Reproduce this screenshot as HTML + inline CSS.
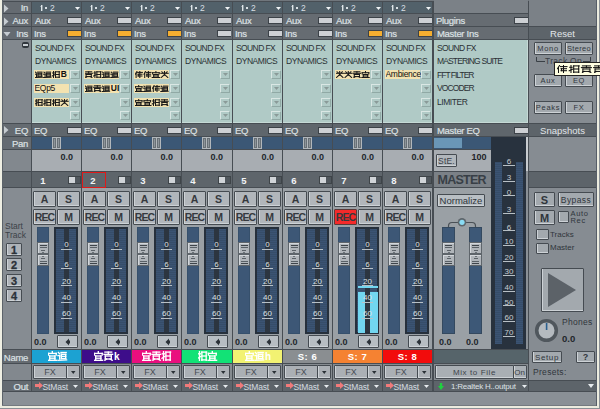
<!DOCTYPE html><html><head><meta charset="utf-8"><style>
html,body{margin:0;padding:0;width:600px;height:409px;overflow:hidden;background:#8a9096}
body{position:relative;font-family:"Liberation Sans",sans-serif}
div,span,svg{position:absolute}
.t{white-space:nowrap}
.btn{box-sizing:border-box;border:1px solid #454b51;box-shadow:inset 1px -1px 0 #cdd2d6;text-align:center;white-space:nowrap;border-radius:1px}
</style></head><body>
<div style="left:0px;top:0px;width:600px;height:409px;background:#8a9096"></div>
<div style="left:3px;top:0px;width:593px;height:1px;background:#70767c"></div>
<div style="left:3px;top:1px;width:429px;height:1px;background:#474d53"></div>
<div style="left:3px;top:2px;width:28px;height:11px;background:#656b71"></div>
<span class="t" style="left:3px;top:2px;width:25px;text-align:right;color:#dde1e4;font-size:9.5px;line-height:12px;letter-spacing:-0.3px;-webkit-text-stroke:0.2px #dde1e4">In</span>
<div style="left:3px;top:14px;width:28px;height:12px;background:#656b71"></div>
<span class="t" style="left:3px;top:15px;width:25px;text-align:right;color:#dde1e4;font-size:9.5px;line-height:12px;letter-spacing:-0.3px;-webkit-text-stroke:0.2px #dde1e4">Aux</span>
<div style="left:3px;top:27px;width:28px;height:12px;background:#656b71"></div>
<span class="t" style="left:3px;top:28px;width:25px;text-align:right;color:#dde1e4;font-size:9.5px;line-height:12px;letter-spacing:-0.3px;-webkit-text-stroke:0.2px #dde1e4">Ins</span>
<svg style="position:absolute;left:3px;top:2px" width="10" height="38" fill="#c6ccd1"><polygon points="1,2.5 5.5,6.5 1,10.5"/><polygon points="1,15.5 5.5,19.5 1,23.5"/><polygon points="0.5,30 7.5,30 4,34.5"/></svg>
<div style="left:3px;top:13px;width:429px;height:1px;background:#474d53"></div>
<div style="left:3px;top:26px;width:429px;height:1px;background:#474d53"></div>
<div style="left:3px;top:39px;width:429px;height:1px;background:#474d53"></div>
<div style="left:3px;top:40px;width:28px;height:83px;background:#82888e"></div>
<div style="left:22px;top:42px;width:7px;height:6px;background:#30363c;border-radius:2px"></div>
<div style="left:23px;top:44px;width:5px;height:1.5px;background:#c8ced3"></div>
<div style="left:3px;top:123px;width:429px;height:1px;background:#474d53"></div>
<div style="left:3px;top:124px;width:28px;height:12px;background:#656b71"></div>
<svg style="position:absolute;left:3px;top:124px" width="10" height="12" fill="#c6ccd1"><polygon points="1,2 5.5,6 1,10"/></svg>
<span class="t" style="left:3px;top:125px;width:25px;text-align:right;color:#dde1e4;font-size:9.5px;line-height:12px;letter-spacing:-0.3px;-webkit-text-stroke:0.2px #dde1e4">EQ</span>
<div style="left:3px;top:136px;width:429px;height:1px;background:#474d53"></div>
<div style="left:3px;top:137px;width:28px;height:12px;background:#656b71"></div>
<span class="t" style="left:3px;top:138px;width:25px;text-align:right;color:#dde1e4;font-size:9.5px;line-height:12px;letter-spacing:-0.3px;-webkit-text-stroke:0.2px #dde1e4">Pan</span>
<div style="left:3px;top:149px;width:429px;height:1px;background:#474d53"></div>
<div style="left:3px;top:150px;width:28px;height:21px;background:#82888e"></div>
<div style="left:3px;top:171px;width:429px;height:1px;background:#474d53"></div>
<div style="left:3px;top:172px;width:28px;height:15px;background:#60676d"></div>
<div style="left:3px;top:187px;width:429px;height:1px;background:#474d53"></div>
<div style="left:3px;top:188px;width:28px;height:161px;background:#868c92"></div>
<span class="t" style="left:5px;top:221px;color:#3c4248;font-size:8.5px;line-height:10px">Start</span>
<span class="t" style="left:5px;top:230px;color:#3c4248;font-size:8.5px;line-height:10px">Track</span>
<div class="btn" style="left:6px;top:243px;width:16px;height:13px;font-size:11px;line-height:12px;font-weight:bold;color:#2c3238;-webkit-text-stroke:0.3px #2c3238;background:#aeb3b8">1</div>
<div class="btn" style="left:6px;top:258px;width:16px;height:13px;font-size:11px;line-height:12px;font-weight:bold;color:#2c3238;-webkit-text-stroke:0.3px #2c3238;background:#aeb3b8">2</div>
<div class="btn" style="left:6px;top:274px;width:16px;height:13px;font-size:11px;line-height:12px;font-weight:bold;color:#2c3238;-webkit-text-stroke:0.3px #2c3238;background:#aeb3b8">3</div>
<div class="btn" style="left:6px;top:289px;width:16px;height:13px;font-size:11px;line-height:12px;font-weight:bold;color:#2c3238;-webkit-text-stroke:0.3px #2c3238;background:#aeb3b8">4</div>
<div style="left:3px;top:349px;width:429px;height:1px;background:#474d53"></div>
<div style="left:3px;top:350px;width:28px;height:13px;background:#656b71"></div>
<span class="t" style="left:3px;top:351px;width:25px;text-align:right;color:#dde1e4;font-size:9.5px;line-height:13px;letter-spacing:-0.3px;-webkit-text-stroke:0.2px #dde1e4">Name</span>
<div style="left:3px;top:363px;width:429px;height:1px;background:#474d53"></div>
<div style="left:3px;top:364px;width:28px;height:16px;background:#82888e"></div>
<div style="left:3px;top:380px;width:429px;height:1px;background:#474d53"></div>
<div style="left:3px;top:381px;width:28px;height:10px;background:#656b71"></div>
<span class="t" style="left:3px;top:381px;width:25px;text-align:right;color:#dde1e4;font-size:9.5px;line-height:11px;letter-spacing:-0.3px;-webkit-text-stroke:0.2px #dde1e4">Out</span>
<div style="left:3px;top:391px;width:593px;height:1px;background:#474d53"></div>
<div style="left:31px;top:1px;width:1px;height:390px;background:#474d53"></div>
<div style="left:32px;top:2px;width:49px;height:11px;background:#52616a"></div>
<div style="left:41px;top:5px;width:1px;height:6px;background:#dfe5e8"></div>
<div style="left:42px;top:5px;width:1px;height:6px;background:#8c989e"></div>
<div style="left:40px;top:6px;width:1px;height:1px;background:#8c989e"></div>
<div style="left:44.5px;top:7px;width:2px;height:2px;background:#d8dfe3"></div>
<span class="t" style="left:50px;top:2px;color:#d8dfe3;font-size:8.5px;line-height:12px">2</span>
<svg style="position:absolute;left:75px;top:7px" width="5" height="3" fill="#f2f5f7"><polygon points="0,0 5,0 2.5,3"/></svg>
<div style="left:32px;top:14px;width:49px;height:12px;background:#666c72"></div>
<span class="t" style="left:35px;top:15px;color:#dde1e4;font-size:9.5px;line-height:12px;letter-spacing:-0.3px;-webkit-text-stroke:0.2px #dde1e4;">Aux</span>
<div style="left:67px;top:17px;width:14px;height:7px;box-sizing:border-box;border:1px solid #3c4248;border-right:none;background:#cdd0d4"></div>
<div style="left:32px;top:27px;width:49px;height:12px;background:#666c72"></div>
<span class="t" style="left:34px;top:28px;color:#dde1e4;font-size:9.5px;line-height:12px;letter-spacing:-0.3px;-webkit-text-stroke:0.2px #dde1e4;">Ins</span>
<div style="left:67px;top:30px;width:14px;height:7px;box-sizing:border-box;border:1px solid #3c4248;border-right:none;background:#f5ae30"></div>
<div style="left:32px;top:40px;width:49px;height:83px;background:#b0cac6"></div>
<div style="left:32px;top:122px;width:49px;height:1px;background:#c6dad6"></div>
<span class="t" style="left:35px;top:42.5px;color:#2a3034;font-size:8.5px;line-height:11px;letter-spacing:-0.6px">SOUND FX</span>
<span class="t" style="left:35px;top:56px;color:#2a3034;font-size:8.5px;line-height:11px;letter-spacing:-0.45px">DYNAMICS</span>
<div style="left:34px;top:70px;width:35px;height:9px;background:#f3e2b0"></div>
<div style="left:35px;top:71px;width:35px;height:7px"><svg width="35" height="7" style="position:absolute;left:0;top:0" stroke="#1a1a1a" stroke-width="1.05" stroke-linecap="square"><line x1="0.4" y1="1.1" x2="1.5" y2="2.0"/><line x1="0.0" y1="3.2" x2="1.5" y2="3.2"/><line x1="1.5" y1="3.2" x2="1.5" y2="5.6"/><line x1="0.0" y1="6.5" x2="7.4" y2="6.2"/><line x1="2.6" y1="1.1" x2="7.0" y2="1.1"/><line x1="3.0" y1="2.3" x2="3.0" y2="5.3"/><line x1="6.7" y1="2.3" x2="6.7" y2="5.3"/><line x1="3.0" y1="2.3" x2="6.7" y2="2.3"/><line x1="3.0" y1="3.8" x2="6.7" y2="3.8"/><line x1="3.0" y1="5.3" x2="6.7" y2="5.3"/><line x1="9.0" y1="1.1" x2="10.1" y2="2.0"/><line x1="8.6" y1="3.2" x2="10.1" y2="3.2"/><line x1="10.1" y1="3.2" x2="10.1" y2="5.6"/><line x1="8.6" y1="6.5" x2="16.0" y2="6.2"/><line x1="11.2" y1="1.1" x2="15.6" y2="1.1"/><line x1="11.6" y1="2.3" x2="11.6" y2="5.3"/><line x1="15.3" y1="2.3" x2="15.3" y2="5.3"/><line x1="11.6" y1="2.3" x2="15.3" y2="2.3"/><line x1="11.6" y1="3.8" x2="15.3" y2="3.8"/><line x1="11.6" y1="5.3" x2="15.3" y2="5.3"/><line x1="17.6" y1="2.0" x2="19.4" y2="2.0"/><line x1="18.5" y1="0.5" x2="18.5" y2="6.5"/><line x1="17.2" y1="5.0" x2="19.6" y2="3.8"/><line x1="20.3" y1="0.8" x2="24.6" y2="0.8"/><line x1="20.5" y1="0.8" x2="20.5" y2="6.5"/><line x1="24.2" y1="0.8" x2="24.2" y2="6.5"/><line x1="20.5" y1="3.5" x2="24.2" y2="3.5"/><line x1="20.5" y1="6.2" x2="24.2" y2="6.2"/></svg></div>
<span class="t" style="left:60.8px;top:70px;color:#111;font-size:8.5px;line-height:9px;font-weight:bold">B</span>
<div style="left:70px;top:70px;width:10px;height:9px;border:1px solid #dae7e4;border-right-color:#90a9a5;border-bottom-color:#90a9a5;box-sizing:border-box"></div>
<svg style="position:absolute;left:73px;top:73px" width="5" height="3" fill="#8a9a98"><polygon points="0,0 5,0 2.5,3"/></svg>
<div style="left:34px;top:84px;width:35px;height:9px;background:#f3e2b0"></div>
<span class="t" style="left:34.5px;top:84px;color:#111;font-size:8.5px;line-height:9.5px;letter-spacing:-0.3px;width:36px;overflow:hidden;white-space:nowrap">EQp5</span>
<div style="left:70px;top:84px;width:10px;height:9px;border:1px solid #dae7e4;border-right-color:#90a9a5;border-bottom-color:#90a9a5;box-sizing:border-box"></div>
<svg style="position:absolute;left:73px;top:87px" width="5" height="3" fill="#8a9a98"><polygon points="0,0 5,0 2.5,3"/></svg>
<div style="left:34px;top:98px;width:35px;height:9px;background:#f3e2b0"></div>
<div style="left:35px;top:99px;width:35px;height:7px"><svg width="35" height="7" style="position:absolute;left:0;top:0" stroke="#1a1a1a" stroke-width="1.05" stroke-linecap="square"><line x1="0.4" y1="2.0" x2="2.2" y2="2.0"/><line x1="1.3" y1="0.5" x2="1.3" y2="6.5"/><line x1="0.0" y1="5.0" x2="2.4" y2="3.8"/><line x1="3.1" y1="0.8" x2="7.4" y2="0.8"/><line x1="3.3" y1="0.8" x2="3.3" y2="6.5"/><line x1="7.0" y1="0.8" x2="7.0" y2="6.5"/><line x1="3.3" y1="3.5" x2="7.0" y2="3.5"/><line x1="3.3" y1="6.2" x2="7.0" y2="6.2"/><line x1="9.0" y1="2.0" x2="10.8" y2="2.0"/><line x1="9.9" y1="0.5" x2="9.9" y2="6.5"/><line x1="8.6" y1="5.0" x2="11.0" y2="3.8"/><line x1="11.7" y1="0.8" x2="16.0" y2="0.8"/><line x1="11.9" y1="0.8" x2="11.9" y2="6.5"/><line x1="15.6" y1="0.8" x2="15.6" y2="6.5"/><line x1="11.9" y1="3.5" x2="15.6" y2="3.5"/><line x1="11.9" y1="6.2" x2="15.6" y2="6.2"/><line x1="17.6" y1="2.0" x2="19.4" y2="2.0"/><line x1="18.5" y1="0.5" x2="18.5" y2="6.5"/><line x1="17.2" y1="5.0" x2="19.6" y2="3.8"/><line x1="20.3" y1="0.8" x2="24.6" y2="0.8"/><line x1="20.5" y1="0.8" x2="20.5" y2="6.5"/><line x1="24.2" y1="0.8" x2="24.2" y2="6.5"/><line x1="20.5" y1="3.5" x2="24.2" y2="3.5"/><line x1="20.5" y1="6.2" x2="24.2" y2="6.2"/><line x1="25.8" y1="2.3" x2="33.2" y2="2.3"/><line x1="29.5" y1="0.5" x2="29.5" y2="4.1"/><line x1="29.5" y1="3.5" x2="26.2" y2="6.5"/><line x1="29.5" y1="3.5" x2="32.8" y2="6.5"/><line x1="26.9" y1="0.8" x2="28.0" y2="1.7"/><line x1="32.1" y1="0.8" x2="31.0" y2="1.7"/></svg></div>
<div style="left:70px;top:98px;width:10px;height:9px;border:1px solid #dae7e4;border-right-color:#90a9a5;border-bottom-color:#90a9a5;box-sizing:border-box"></div>
<svg style="position:absolute;left:73px;top:101px" width="5" height="3" fill="#8a9a98"><polygon points="0,0 5,0 2.5,3"/></svg>
<div style="left:70px;top:111px;width:10px;height:9px;border:1px solid #dae7e4;border-right-color:#90a9a5;border-bottom-color:#90a9a5;box-sizing:border-box"></div>
<svg style="position:absolute;left:73px;top:114px" width="5" height="3" fill="#8a9a98"><polygon points="0,0 5,0 2.5,3"/></svg>
<div style="left:32px;top:124px;width:49px;height:12px;background:#5f666c"></div>
<span class="t" style="left:34px;top:125px;color:#dde1e4;font-size:9.5px;line-height:12px;letter-spacing:-0.3px;-webkit-text-stroke:0.2px #dde1e4;">EQ</span>
<div style="left:67px;top:127px;width:14px;height:7px;box-sizing:border-box;border:1px solid #3c4248;border-right:none;background:#cdd0d4"></div>
<div style="left:32px;top:137px;width:49px;height:12px;background:#3b5775"></div>
<div style="left:52px;top:137px;width:5px;height:12px;background:#687076;border:1px solid #b2b7bb;box-sizing:border-box"></div>
<div style="left:56px;top:137px;width:5px;height:12px;background:#687076;border:1px solid #b2b7bb;box-sizing:border-box"></div>
<div style="left:54px;top:139px;width:1px;height:8px;background:#8e959a"></div>
<div style="left:58px;top:139px;width:1px;height:8px;background:#8e959a"></div>
<div style="left:32px;top:150px;width:49px;height:21px;background:#a8adb2"></div>
<span class="t" style="left:50px;top:151px;color:#22272c;font-size:9px;line-height:13px;width:23px;text-align:right;font-weight:bold">0.0</span>
<div style="left:32px;top:172px;width:49px;height:15px;background:#5e656b"></div>
<span class="t" style="left:38px;top:172.5px;color:#f2f4f6;font-size:9.5px;line-height:15px;width:10px;text-align:center;font-weight:bold">1</span>
<div style="left:68px;top:176px;width:13px;height:8px;background:#50575d;border:1px solid #3e4448;box-sizing:border-box"></div>
<div style="left:69px;top:177px;width:6px;height:6px;background:#d0d4d8"></div>
<div style="left:32px;top:188px;width:49px;height:161px;background:#9aa0a5"></div>
<div class="btn" style="left:33px;top:191px;width:23px;height:16px;background:#b1b6bb;font-size:10.5px;line-height:15px;font-weight:bold;color:#35393e;letter-spacing:0px">A</div>
<div class="btn" style="left:57px;top:191px;width:23px;height:16px;background:#b1b6bb;font-size:10.5px;line-height:15px;font-weight:bold;color:#35393e;letter-spacing:0px">S</div>
<div class="btn" style="left:33px;top:209px;width:23px;height:16px;background:#b1b6bb;font-size:10.5px;line-height:15px;font-weight:bold;color:#35393e;letter-spacing:-0.9px">REC</div>
<div class="btn" style="left:57px;top:209px;width:23px;height:16px;background:#b1b6bb;font-size:10.5px;line-height:15px;font-weight:bold;color:#35393e;letter-spacing:0px">M</div>
<div style="left:37px;top:227px;width:12px;height:107px;background:#3d5776;border:1px solid #36506c;box-sizing:border-box"></div>
<div style="left:37px;top:242px;width:12px;height:12px;background:#b0b5ba;border:1px solid #5e656b;box-sizing:border-box;box-shadow:inset 1px 1px 0 #d3d7db"></div>
<div style="left:37px;top:254px;width:12px;height:12px;background:#b0b5ba;border:1px solid #5e656b;box-sizing:border-box;box-shadow:inset 1px 1px 0 #d3d7db"></div>
<div style="left:39.5px;top:245px;width:7.0px;height:1px;background:#3e444a"></div>
<div style="left:39.5px;top:247px;width:7.0px;height:1px;background:#5a6167"></div>
<div style="left:41.0px;top:250px;width:4px;height:1px;background:#5a6167"></div>
<div style="left:42.0px;top:252px;width:2px;height:1px;background:#6a7177"></div>
<div style="left:42.0px;top:256px;width:2px;height:1px;background:#6a7177"></div>
<div style="left:41.0px;top:258px;width:4px;height:1px;background:#5a6167"></div>
<div style="left:39.5px;top:261px;width:7.0px;height:1px;background:#5a6167"></div>
<div style="left:39.5px;top:263px;width:7.0px;height:1px;background:#3e444a"></div>
<div style="left:54px;top:227px;width:24px;height:107px;background:#26303c"></div>
<div style="left:56px;top:229px;width:20px;height:103px;background:repeating-linear-gradient(0deg,#3b5373 0 1px,#364d69 1px 2px)"></div>
<div style="left:64px;top:229px;width:5px;height:103px;background:#2c3540"></div>
<span class="t" style="left:58.5px;top:240px;color:#dce2e6;font-size:8px;line-height:9px;width:16px;text-align:center">0</span>
<div style="left:61px;top:249px;width:11px;height:1px;background:#b8c0c6"></div>
<span class="t" style="left:58.5px;top:260px;color:#dce2e6;font-size:8px;line-height:9px;width:16px;text-align:center">6</span>
<div style="left:61px;top:268px;width:11px;height:1px;background:#b8c0c6"></div>
<span class="t" style="left:58.5px;top:277px;color:#dce2e6;font-size:8px;line-height:9px;width:16px;text-align:center">20</span>
<div style="left:61px;top:285px;width:11px;height:1px;background:#b8c0c6"></div>
<span class="t" style="left:58.5px;top:293px;color:#dce2e6;font-size:8px;line-height:9px;width:16px;text-align:center">40</span>
<div style="left:61px;top:302px;width:11px;height:1px;background:#b8c0c6"></div>
<span class="t" style="left:58.5px;top:309px;color:#dce2e6;font-size:8px;line-height:9px;width:16px;text-align:center">60</span>
<div style="left:61px;top:318px;width:11px;height:1px;background:#b8c0c6"></div>
<span class="t" style="left:34px;top:336px;color:#22272c;font-size:9px;line-height:12px;font-weight:bold">0.0</span>
<div class="btn" style="left:57px;top:335px;width:21px;height:13px;background:#b7bdc2"></div>
<svg style="position:absolute;left:65px;top:338px" width="6" height="8" fill="#2c3238"><polygon points="4,0.5 4,7.5 0.5,4"/><rect x="4" y="2.5" width="1" height="3"/></svg>
<div style="left:32px;top:350px;width:49px;height:13px;background:#1ca2d2"></div>
<div style="left:48px;top:351px;width:20px;height:10px"><svg width="20" height="10" style="position:absolute;left:0;top:0" stroke="#ffffff" stroke-width="1.35" stroke-linecap="square"><line x1="4.3" y1="0.7" x2="4.3" y2="2.4"/><line x1="0.4" y1="2.4" x2="8.2" y2="2.4"/><line x1="0.4" y1="2.4" x2="0.4" y2="4.1"/><line x1="8.2" y1="2.4" x2="8.2" y2="4.1"/><line x1="1.7" y1="5.0" x2="6.9" y2="5.0"/><line x1="1.7" y1="5.0" x2="1.7" y2="9.3"/><line x1="6.9" y1="5.0" x2="6.9" y2="9.3"/><line x1="1.7" y1="7.2" x2="6.9" y2="7.2"/><line x1="0.0" y1="9.3" x2="8.6" y2="9.3"/><line x1="10.4" y1="1.5" x2="11.7" y2="2.8"/><line x1="10.0" y1="4.6" x2="11.7" y2="4.6"/><line x1="11.7" y1="4.6" x2="11.7" y2="8.0"/><line x1="10.0" y1="9.3" x2="18.6" y2="8.9"/><line x1="13.0" y1="1.5" x2="18.2" y2="1.5"/><line x1="13.4" y1="3.3" x2="13.4" y2="7.6"/><line x1="17.7" y1="3.3" x2="17.7" y2="7.6"/><line x1="13.4" y1="3.3" x2="17.7" y2="3.3"/><line x1="13.4" y1="5.4" x2="17.7" y2="5.4"/><line x1="13.4" y1="7.6" x2="17.7" y2="7.6"/></svg></div>
<div style="left:32px;top:364px;width:49px;height:16px;background:#868c91"></div>
<div class="btn" style="left:33px;top:365px;width:34px;height:14px;background:#abb0b5;font-size:9px;line-height:13px;color:#474d53">FX</div>
<div class="btn" style="left:66px;top:365px;width:14px;height:14px;background:#abb0b5"></div>
<svg style="position:absolute;left:71px;top:371px" width="4.5" height="3" fill="#2a3036"><polygon points="0,0 4.5,0 2.25,3"/></svg>
<div style="left:32px;top:381px;width:49px;height:10px;background:#5d646a"></div>
<svg style="position:absolute;left:35px;top:382px" width="8" height="7" fill="#f07a7a"><rect x="0" y="2" width="4" height="3"/><polygon points="4,0 8,3.5 4,7"/></svg>
<span class="t" style="left:42.5px;top:380.5px;color:#d6dce0;font-size:8.5px;line-height:12px;letter-spacing:-0.15px">StMast</span>
<svg style="position:absolute;left:72.5px;top:385px" width="5" height="3" fill="#e8ecef"><polygon points="0,0 5,0 2.5,3"/></svg>
<div style="left:81px;top:1px;width:1px;height:390px;background:#474d53"></div>
<div style="left:82px;top:2px;width:49px;height:11px;background:#52616a"></div>
<div style="left:91px;top:5px;width:1px;height:6px;background:#dfe5e8"></div>
<div style="left:92px;top:5px;width:1px;height:6px;background:#8c989e"></div>
<div style="left:90px;top:6px;width:1px;height:1px;background:#8c989e"></div>
<div style="left:94.5px;top:7px;width:2px;height:2px;background:#d8dfe3"></div>
<span class="t" style="left:100px;top:2px;color:#d8dfe3;font-size:8.5px;line-height:12px">2</span>
<svg style="position:absolute;left:125px;top:7px" width="5" height="3" fill="#f2f5f7"><polygon points="0,0 5,0 2.5,3"/></svg>
<div style="left:82px;top:14px;width:49px;height:12px;background:#666c72"></div>
<span class="t" style="left:85px;top:15px;color:#dde1e4;font-size:9.5px;line-height:12px;letter-spacing:-0.3px;-webkit-text-stroke:0.2px #dde1e4;">Aux</span>
<div style="left:117px;top:17px;width:14px;height:7px;box-sizing:border-box;border:1px solid #3c4248;border-right:none;background:#cdd0d4"></div>
<div style="left:82px;top:27px;width:49px;height:12px;background:#666c72"></div>
<span class="t" style="left:84px;top:28px;color:#dde1e4;font-size:9.5px;line-height:12px;letter-spacing:-0.3px;-webkit-text-stroke:0.2px #dde1e4;">Ins</span>
<div style="left:117px;top:30px;width:14px;height:7px;box-sizing:border-box;border:1px solid #3c4248;border-right:none;background:#f5ae30"></div>
<div style="left:82px;top:40px;width:49px;height:83px;background:#b0cac6"></div>
<div style="left:82px;top:122px;width:49px;height:1px;background:#c6dad6"></div>
<span class="t" style="left:85px;top:42.5px;color:#2a3034;font-size:8.5px;line-height:11px;letter-spacing:-0.6px">SOUND FX</span>
<span class="t" style="left:85px;top:56px;color:#2a3034;font-size:8.5px;line-height:11px;letter-spacing:-0.45px">DYNAMICS</span>
<div style="left:84px;top:70px;width:35px;height:9px;background:#f3e2b0"></div>
<div style="left:85px;top:71px;width:35px;height:7px"><svg width="35" height="7" style="position:absolute;left:0;top:0" stroke="#1a1a1a" stroke-width="1.05" stroke-linecap="square"><line x1="0.7" y1="0.8" x2="6.7" y2="0.8"/><line x1="3.7" y1="0.8" x2="3.7" y2="2.3"/><line x1="0.0" y1="2.3" x2="7.4" y2="2.3"/><line x1="1.1" y1="3.5" x2="6.3" y2="3.5"/><line x1="1.1" y1="3.5" x2="1.1" y2="5.6"/><line x1="6.3" y1="3.5" x2="6.3" y2="5.6"/><line x1="1.1" y1="5.6" x2="6.3" y2="5.6"/><line x1="2.2" y1="5.6" x2="0.7" y2="6.5"/><line x1="5.2" y1="5.6" x2="7.0" y2="6.5"/><line x1="9.0" y1="2.0" x2="10.8" y2="2.0"/><line x1="9.9" y1="0.5" x2="9.9" y2="6.5"/><line x1="8.6" y1="5.0" x2="11.0" y2="3.8"/><line x1="11.7" y1="0.8" x2="16.0" y2="0.8"/><line x1="11.9" y1="0.8" x2="11.9" y2="6.5"/><line x1="15.6" y1="0.8" x2="15.6" y2="6.5"/><line x1="11.9" y1="3.5" x2="15.6" y2="3.5"/><line x1="11.9" y1="6.2" x2="15.6" y2="6.2"/><line x1="17.6" y1="1.1" x2="18.7" y2="2.0"/><line x1="17.2" y1="3.2" x2="18.7" y2="3.2"/><line x1="18.7" y1="3.2" x2="18.7" y2="5.6"/><line x1="17.2" y1="6.5" x2="24.6" y2="6.2"/><line x1="19.8" y1="1.1" x2="24.2" y2="1.1"/><line x1="20.2" y1="2.3" x2="20.2" y2="5.3"/><line x1="23.9" y1="2.3" x2="23.9" y2="5.3"/><line x1="20.2" y1="2.3" x2="23.9" y2="2.3"/><line x1="20.2" y1="3.8" x2="23.9" y2="3.8"/><line x1="20.2" y1="5.3" x2="23.9" y2="5.3"/><line x1="26.2" y1="1.1" x2="27.3" y2="2.0"/><line x1="25.8" y1="3.2" x2="27.3" y2="3.2"/><line x1="27.3" y1="3.2" x2="27.3" y2="5.6"/><line x1="25.8" y1="6.5" x2="33.2" y2="6.2"/><line x1="28.4" y1="1.1" x2="32.8" y2="1.1"/><line x1="28.8" y1="2.3" x2="28.8" y2="5.3"/><line x1="32.5" y1="2.3" x2="32.5" y2="5.3"/><line x1="28.8" y1="2.3" x2="32.5" y2="2.3"/><line x1="28.8" y1="3.8" x2="32.5" y2="3.8"/><line x1="28.8" y1="5.3" x2="32.5" y2="5.3"/></svg></div>
<div style="left:120px;top:70px;width:10px;height:9px;border:1px solid #dae7e4;border-right-color:#90a9a5;border-bottom-color:#90a9a5;box-sizing:border-box"></div>
<svg style="position:absolute;left:123px;top:73px" width="5" height="3" fill="#8a9a98"><polygon points="0,0 5,0 2.5,3"/></svg>
<div style="left:84px;top:84px;width:35px;height:9px;background:#f3e2b0"></div>
<div style="left:85px;top:85px;width:35px;height:7px"><svg width="35" height="7" style="position:absolute;left:0;top:0" stroke="#1a1a1a" stroke-width="1.05" stroke-linecap="square"><line x1="0.4" y1="1.1" x2="1.5" y2="2.0"/><line x1="0.0" y1="3.2" x2="1.5" y2="3.2"/><line x1="1.5" y1="3.2" x2="1.5" y2="5.6"/><line x1="0.0" y1="6.5" x2="7.4" y2="6.2"/><line x1="2.6" y1="1.1" x2="7.0" y2="1.1"/><line x1="3.0" y1="2.3" x2="3.0" y2="5.3"/><line x1="6.7" y1="2.3" x2="6.7" y2="5.3"/><line x1="3.0" y1="2.3" x2="6.7" y2="2.3"/><line x1="3.0" y1="3.8" x2="6.7" y2="3.8"/><line x1="3.0" y1="5.3" x2="6.7" y2="5.3"/><line x1="9.3" y1="0.8" x2="15.3" y2="0.8"/><line x1="12.3" y1="0.8" x2="12.3" y2="2.3"/><line x1="8.6" y1="2.3" x2="16.0" y2="2.3"/><line x1="9.7" y1="3.5" x2="14.9" y2="3.5"/><line x1="9.7" y1="3.5" x2="9.7" y2="5.6"/><line x1="14.9" y1="3.5" x2="14.9" y2="5.6"/><line x1="9.7" y1="5.6" x2="14.9" y2="5.6"/><line x1="10.8" y1="5.6" x2="9.3" y2="6.5"/><line x1="13.8" y1="5.6" x2="15.6" y2="6.5"/><line x1="17.6" y1="1.1" x2="18.7" y2="2.0"/><line x1="17.2" y1="3.2" x2="18.7" y2="3.2"/><line x1="18.7" y1="3.2" x2="18.7" y2="5.6"/><line x1="17.2" y1="6.5" x2="24.6" y2="6.2"/><line x1="19.8" y1="1.1" x2="24.2" y2="1.1"/><line x1="20.2" y1="2.3" x2="20.2" y2="5.3"/><line x1="23.9" y1="2.3" x2="23.9" y2="5.3"/><line x1="20.2" y1="2.3" x2="23.9" y2="2.3"/><line x1="20.2" y1="3.8" x2="23.9" y2="3.8"/><line x1="20.2" y1="5.3" x2="23.9" y2="5.3"/></svg></div>
<span class="t" style="left:110.8px;top:84px;color:#111;font-size:8.5px;line-height:9px;font-weight:bold">UI</span>
<div style="left:120px;top:84px;width:10px;height:9px;border:1px solid #dae7e4;border-right-color:#90a9a5;border-bottom-color:#90a9a5;box-sizing:border-box"></div>
<svg style="position:absolute;left:123px;top:87px" width="5" height="3" fill="#8a9a98"><polygon points="0,0 5,0 2.5,3"/></svg>
<div style="left:120px;top:98px;width:10px;height:9px;border:1px solid #dae7e4;border-right-color:#90a9a5;border-bottom-color:#90a9a5;box-sizing:border-box"></div>
<svg style="position:absolute;left:123px;top:101px" width="5" height="3" fill="#8a9a98"><polygon points="0,0 5,0 2.5,3"/></svg>
<div style="left:120px;top:111px;width:10px;height:9px;border:1px solid #dae7e4;border-right-color:#90a9a5;border-bottom-color:#90a9a5;box-sizing:border-box"></div>
<svg style="position:absolute;left:123px;top:114px" width="5" height="3" fill="#8a9a98"><polygon points="0,0 5,0 2.5,3"/></svg>
<div style="left:82px;top:124px;width:49px;height:12px;background:#5f666c"></div>
<span class="t" style="left:84px;top:125px;color:#dde1e4;font-size:9.5px;line-height:12px;letter-spacing:-0.3px;-webkit-text-stroke:0.2px #dde1e4;">EQ</span>
<div style="left:117px;top:127px;width:14px;height:7px;box-sizing:border-box;border:1px solid #3c4248;border-right:none;background:#cdd0d4"></div>
<div style="left:82px;top:137px;width:49px;height:12px;background:#3b5775"></div>
<div style="left:102px;top:137px;width:5px;height:12px;background:#687076;border:1px solid #b2b7bb;box-sizing:border-box"></div>
<div style="left:106px;top:137px;width:5px;height:12px;background:#687076;border:1px solid #b2b7bb;box-sizing:border-box"></div>
<div style="left:104px;top:139px;width:1px;height:8px;background:#8e959a"></div>
<div style="left:108px;top:139px;width:1px;height:8px;background:#8e959a"></div>
<div style="left:82px;top:150px;width:49px;height:21px;background:#a8adb2"></div>
<span class="t" style="left:100px;top:151px;color:#22272c;font-size:9px;line-height:13px;width:23px;text-align:right;font-weight:bold">0.0</span>
<div style="left:82px;top:172px;width:49px;height:15px;background:#5e656b"></div>
<span class="t" style="left:88px;top:172.5px;color:#f2f4f6;font-size:9.5px;line-height:15px;width:10px;text-align:center;font-weight:bold">2</span>
<div style="left:118px;top:176px;width:13px;height:8px;background:#50575d;border:1px solid #3e4448;box-sizing:border-box"></div>
<div style="left:119px;top:177px;width:6px;height:6px;background:#d0d4d8"></div>
<div style="left:82px;top:188px;width:49px;height:161px;background:#9aa0a5"></div>
<div class="btn" style="left:83px;top:191px;width:23px;height:16px;background:#b1b6bb;font-size:10.5px;line-height:15px;font-weight:bold;color:#35393e;letter-spacing:0px">A</div>
<div class="btn" style="left:107px;top:191px;width:23px;height:16px;background:#b1b6bb;font-size:10.5px;line-height:15px;font-weight:bold;color:#35393e;letter-spacing:0px">S</div>
<div class="btn" style="left:83px;top:209px;width:23px;height:16px;background:#b1b6bb;font-size:10.5px;line-height:15px;font-weight:bold;color:#35393e;letter-spacing:-0.9px">REC</div>
<div class="btn" style="left:107px;top:209px;width:23px;height:16px;background:#b1b6bb;font-size:10.5px;line-height:15px;font-weight:bold;color:#35393e;letter-spacing:0px">M</div>
<div style="left:87px;top:227px;width:12px;height:107px;background:#3d5776;border:1px solid #36506c;box-sizing:border-box"></div>
<div style="left:87px;top:242px;width:12px;height:12px;background:#b0b5ba;border:1px solid #5e656b;box-sizing:border-box;box-shadow:inset 1px 1px 0 #d3d7db"></div>
<div style="left:87px;top:254px;width:12px;height:12px;background:#b0b5ba;border:1px solid #5e656b;box-sizing:border-box;box-shadow:inset 1px 1px 0 #d3d7db"></div>
<div style="left:89.5px;top:245px;width:7.0px;height:1px;background:#3e444a"></div>
<div style="left:89.5px;top:247px;width:7.0px;height:1px;background:#5a6167"></div>
<div style="left:91.0px;top:250px;width:4px;height:1px;background:#5a6167"></div>
<div style="left:92.0px;top:252px;width:2px;height:1px;background:#6a7177"></div>
<div style="left:92.0px;top:256px;width:2px;height:1px;background:#6a7177"></div>
<div style="left:91.0px;top:258px;width:4px;height:1px;background:#5a6167"></div>
<div style="left:89.5px;top:261px;width:7.0px;height:1px;background:#5a6167"></div>
<div style="left:89.5px;top:263px;width:7.0px;height:1px;background:#3e444a"></div>
<div style="left:104px;top:227px;width:24px;height:107px;background:#26303c"></div>
<div style="left:106px;top:229px;width:20px;height:103px;background:repeating-linear-gradient(0deg,#3b5373 0 1px,#364d69 1px 2px)"></div>
<div style="left:114px;top:229px;width:5px;height:103px;background:#2c3540"></div>
<span class="t" style="left:108.5px;top:240px;color:#dce2e6;font-size:8px;line-height:9px;width:16px;text-align:center">0</span>
<div style="left:111px;top:249px;width:11px;height:1px;background:#b8c0c6"></div>
<span class="t" style="left:108.5px;top:260px;color:#dce2e6;font-size:8px;line-height:9px;width:16px;text-align:center">6</span>
<div style="left:111px;top:268px;width:11px;height:1px;background:#b8c0c6"></div>
<span class="t" style="left:108.5px;top:277px;color:#dce2e6;font-size:8px;line-height:9px;width:16px;text-align:center">20</span>
<div style="left:111px;top:285px;width:11px;height:1px;background:#b8c0c6"></div>
<span class="t" style="left:108.5px;top:293px;color:#dce2e6;font-size:8px;line-height:9px;width:16px;text-align:center">40</span>
<div style="left:111px;top:302px;width:11px;height:1px;background:#b8c0c6"></div>
<span class="t" style="left:108.5px;top:309px;color:#dce2e6;font-size:8px;line-height:9px;width:16px;text-align:center">60</span>
<div style="left:111px;top:318px;width:11px;height:1px;background:#b8c0c6"></div>
<span class="t" style="left:84px;top:336px;color:#22272c;font-size:9px;line-height:12px;font-weight:bold">0.0</span>
<div class="btn" style="left:107px;top:335px;width:21px;height:13px;background:#b7bdc2"></div>
<svg style="position:absolute;left:115px;top:338px" width="6" height="8" fill="#2c3238"><polygon points="4,0.5 4,7.5 0.5,4"/><rect x="4" y="2.5" width="1" height="3"/></svg>
<div style="left:82px;top:350px;width:49px;height:13px;background:#3d0d8a"></div>
<div style="left:94px;top:351px;width:20px;height:10px"><svg width="20" height="10" style="position:absolute;left:0;top:0" stroke="#ffffff" stroke-width="1.35" stroke-linecap="square"><line x1="4.3" y1="0.7" x2="4.3" y2="2.4"/><line x1="0.4" y1="2.4" x2="8.2" y2="2.4"/><line x1="0.4" y1="2.4" x2="0.4" y2="4.1"/><line x1="8.2" y1="2.4" x2="8.2" y2="4.1"/><line x1="1.7" y1="5.0" x2="6.9" y2="5.0"/><line x1="1.7" y1="5.0" x2="1.7" y2="9.3"/><line x1="6.9" y1="5.0" x2="6.9" y2="9.3"/><line x1="1.7" y1="7.2" x2="6.9" y2="7.2"/><line x1="0.0" y1="9.3" x2="8.6" y2="9.3"/><line x1="10.9" y1="1.1" x2="17.7" y2="1.1"/><line x1="14.3" y1="1.1" x2="14.3" y2="3.3"/><line x1="10.0" y1="3.3" x2="18.6" y2="3.3"/><line x1="11.3" y1="5.0" x2="17.3" y2="5.0"/><line x1="11.3" y1="5.0" x2="11.3" y2="8.0"/><line x1="17.3" y1="5.0" x2="17.3" y2="8.0"/><line x1="11.3" y1="8.0" x2="17.3" y2="8.0"/><line x1="12.6" y1="8.0" x2="10.9" y2="9.3"/><line x1="16.0" y1="8.0" x2="18.2" y2="9.3"/></svg></div>
<span class="t" style="left:114px;top:350px;color:#fff;font-size:10px;line-height:13px;font-weight:bold">k</span>
<div style="left:82px;top:364px;width:49px;height:16px;background:#868c91"></div>
<div class="btn" style="left:83px;top:365px;width:34px;height:14px;background:#abb0b5;font-size:9px;line-height:13px;color:#474d53">FX</div>
<div class="btn" style="left:116px;top:365px;width:14px;height:14px;background:#abb0b5"></div>
<svg style="position:absolute;left:121px;top:371px" width="4.5" height="3" fill="#2a3036"><polygon points="0,0 4.5,0 2.25,3"/></svg>
<div style="left:82px;top:381px;width:49px;height:10px;background:#5d646a"></div>
<svg style="position:absolute;left:85px;top:382px" width="8" height="7" fill="#f07a7a"><rect x="0" y="2" width="4" height="3"/><polygon points="4,0 8,3.5 4,7"/></svg>
<span class="t" style="left:92.5px;top:380.5px;color:#d6dce0;font-size:8.5px;line-height:12px;letter-spacing:-0.15px">StMast</span>
<svg style="position:absolute;left:122.5px;top:385px" width="5" height="3" fill="#e8ecef"><polygon points="0,0 5,0 2.5,3"/></svg>
<div style="left:131px;top:1px;width:1px;height:390px;background:#474d53"></div>
<div style="left:132px;top:2px;width:49px;height:11px;background:#52616a"></div>
<div style="left:141px;top:5px;width:1px;height:6px;background:#dfe5e8"></div>
<div style="left:142px;top:5px;width:1px;height:6px;background:#8c989e"></div>
<div style="left:140px;top:6px;width:1px;height:1px;background:#8c989e"></div>
<div style="left:144.5px;top:7px;width:2px;height:2px;background:#d8dfe3"></div>
<span class="t" style="left:150px;top:2px;color:#d8dfe3;font-size:8.5px;line-height:12px">2</span>
<svg style="position:absolute;left:175px;top:7px" width="5" height="3" fill="#f2f5f7"><polygon points="0,0 5,0 2.5,3"/></svg>
<div style="left:132px;top:14px;width:49px;height:12px;background:#666c72"></div>
<span class="t" style="left:135px;top:15px;color:#dde1e4;font-size:9.5px;line-height:12px;letter-spacing:-0.3px;-webkit-text-stroke:0.2px #dde1e4;">Aux</span>
<div style="left:167px;top:17px;width:14px;height:7px;box-sizing:border-box;border:1px solid #3c4248;border-right:none;background:#cdd0d4"></div>
<div style="left:132px;top:27px;width:49px;height:12px;background:#666c72"></div>
<span class="t" style="left:134px;top:28px;color:#dde1e4;font-size:9.5px;line-height:12px;letter-spacing:-0.3px;-webkit-text-stroke:0.2px #dde1e4;">Ins</span>
<div style="left:167px;top:30px;width:14px;height:7px;box-sizing:border-box;border:1px solid #3c4248;border-right:none;background:#f5ae30"></div>
<div style="left:132px;top:40px;width:49px;height:83px;background:#b0cac6"></div>
<div style="left:132px;top:122px;width:49px;height:1px;background:#c6dad6"></div>
<span class="t" style="left:135px;top:42.5px;color:#2a3034;font-size:8.5px;line-height:11px;letter-spacing:-0.6px">SOUND FX</span>
<span class="t" style="left:135px;top:56px;color:#2a3034;font-size:8.5px;line-height:11px;letter-spacing:-0.45px">DYNAMICS</span>
<div style="left:134px;top:70px;width:35px;height:9px;background:#f3e2b0"></div>
<div style="left:135px;top:71px;width:35px;height:7px"><svg width="35" height="7" style="position:absolute;left:0;top:0" stroke="#1a1a1a" stroke-width="1.05" stroke-linecap="square"><line x1="1.9" y1="0.5" x2="0.4" y2="3.2"/><line x1="1.1" y1="2.3" x2="1.1" y2="6.5"/><line x1="2.6" y1="1.4" x2="7.4" y2="1.4"/><line x1="4.8" y1="0.5" x2="4.8" y2="6.5"/><line x1="3.0" y1="3.2" x2="7.0" y2="3.2"/><line x1="3.0" y1="5.0" x2="7.0" y2="5.0"/><line x1="3.3" y1="3.2" x2="3.3" y2="5.0"/><line x1="10.4" y1="0.5" x2="9.0" y2="3.2"/><line x1="9.7" y1="2.3" x2="9.7" y2="6.5"/><line x1="11.2" y1="1.4" x2="16.0" y2="1.4"/><line x1="13.4" y1="0.5" x2="13.4" y2="6.5"/><line x1="11.6" y1="3.2" x2="15.6" y2="3.2"/><line x1="11.6" y1="5.0" x2="15.6" y2="5.0"/><line x1="11.9" y1="3.2" x2="11.9" y2="5.0"/><line x1="20.9" y1="0.5" x2="20.9" y2="1.7"/><line x1="17.6" y1="1.7" x2="24.2" y2="1.7"/><line x1="17.6" y1="1.7" x2="17.6" y2="2.9"/><line x1="24.2" y1="1.7" x2="24.2" y2="2.9"/><line x1="18.7" y1="3.5" x2="23.1" y2="3.5"/><line x1="18.7" y1="3.5" x2="18.7" y2="6.5"/><line x1="23.1" y1="3.5" x2="23.1" y2="6.5"/><line x1="18.7" y1="5.0" x2="23.1" y2="5.0"/><line x1="17.2" y1="6.5" x2="24.6" y2="6.5"/><line x1="25.8" y1="2.3" x2="33.2" y2="2.3"/><line x1="29.5" y1="0.5" x2="29.5" y2="4.1"/><line x1="29.5" y1="3.5" x2="26.2" y2="6.5"/><line x1="29.5" y1="3.5" x2="32.8" y2="6.5"/><line x1="26.9" y1="0.8" x2="28.0" y2="1.7"/><line x1="32.1" y1="0.8" x2="31.0" y2="1.7"/></svg></div>
<div style="left:170px;top:70px;width:10px;height:9px;border:1px solid #dae7e4;border-right-color:#90a9a5;border-bottom-color:#90a9a5;box-sizing:border-box"></div>
<svg style="position:absolute;left:173px;top:73px" width="5" height="3" fill="#8a9a98"><polygon points="0,0 5,0 2.5,3"/></svg>
<div style="left:134px;top:84px;width:35px;height:9px;background:#f3e2b0"></div>
<div style="left:135px;top:85px;width:35px;height:7px"><svg width="35" height="7" style="position:absolute;left:0;top:0" stroke="#1a1a1a" stroke-width="1.05" stroke-linecap="square"><line x1="3.7" y1="0.5" x2="3.7" y2="1.7"/><line x1="0.4" y1="1.7" x2="7.0" y2="1.7"/><line x1="0.4" y1="1.7" x2="0.4" y2="2.9"/><line x1="7.0" y1="1.7" x2="7.0" y2="2.9"/><line x1="1.5" y1="3.5" x2="5.9" y2="3.5"/><line x1="1.5" y1="3.5" x2="1.5" y2="6.5"/><line x1="5.9" y1="3.5" x2="5.9" y2="6.5"/><line x1="1.5" y1="5.0" x2="5.9" y2="5.0"/><line x1="0.0" y1="6.5" x2="7.4" y2="6.5"/><line x1="9.0" y1="1.1" x2="10.1" y2="2.0"/><line x1="8.6" y1="3.2" x2="10.1" y2="3.2"/><line x1="10.1" y1="3.2" x2="10.1" y2="5.6"/><line x1="8.6" y1="6.5" x2="16.0" y2="6.2"/><line x1="11.2" y1="1.1" x2="15.6" y2="1.1"/><line x1="11.6" y1="2.3" x2="11.6" y2="5.3"/><line x1="15.3" y1="2.3" x2="15.3" y2="5.3"/><line x1="11.6" y1="2.3" x2="15.3" y2="2.3"/><line x1="11.6" y1="3.8" x2="15.3" y2="3.8"/><line x1="11.6" y1="5.3" x2="15.3" y2="5.3"/><line x1="19.1" y1="0.5" x2="17.6" y2="3.2"/><line x1="18.3" y1="2.3" x2="18.3" y2="6.5"/><line x1="19.8" y1="1.4" x2="24.6" y2="1.4"/><line x1="22.0" y1="0.5" x2="22.0" y2="6.5"/><line x1="20.2" y1="3.2" x2="24.2" y2="3.2"/><line x1="20.2" y1="5.0" x2="24.2" y2="5.0"/><line x1="20.5" y1="3.2" x2="20.5" y2="5.0"/><line x1="26.2" y1="1.1" x2="27.3" y2="2.0"/><line x1="25.8" y1="3.2" x2="27.3" y2="3.2"/><line x1="27.3" y1="3.2" x2="27.3" y2="5.6"/><line x1="25.8" y1="6.5" x2="33.2" y2="6.2"/><line x1="28.4" y1="1.1" x2="32.8" y2="1.1"/><line x1="28.8" y1="2.3" x2="28.8" y2="5.3"/><line x1="32.5" y1="2.3" x2="32.5" y2="5.3"/><line x1="28.8" y1="2.3" x2="32.5" y2="2.3"/><line x1="28.8" y1="3.8" x2="32.5" y2="3.8"/><line x1="28.8" y1="5.3" x2="32.5" y2="5.3"/></svg></div>
<div style="left:170px;top:84px;width:10px;height:9px;border:1px solid #dae7e4;border-right-color:#90a9a5;border-bottom-color:#90a9a5;box-sizing:border-box"></div>
<svg style="position:absolute;left:173px;top:87px" width="5" height="3" fill="#8a9a98"><polygon points="0,0 5,0 2.5,3"/></svg>
<div style="left:134px;top:98px;width:35px;height:9px;background:#f3e2b0"></div>
<div style="left:135px;top:99px;width:35px;height:7px"><svg width="35" height="7" style="position:absolute;left:0;top:0" stroke="#1a1a1a" stroke-width="1.05" stroke-linecap="square"><line x1="3.7" y1="0.5" x2="3.7" y2="1.7"/><line x1="0.4" y1="1.7" x2="7.0" y2="1.7"/><line x1="0.4" y1="1.7" x2="0.4" y2="2.9"/><line x1="7.0" y1="1.7" x2="7.0" y2="2.9"/><line x1="1.5" y1="3.5" x2="5.9" y2="3.5"/><line x1="1.5" y1="3.5" x2="1.5" y2="6.5"/><line x1="5.9" y1="3.5" x2="5.9" y2="6.5"/><line x1="1.5" y1="5.0" x2="5.9" y2="5.0"/><line x1="0.0" y1="6.5" x2="7.4" y2="6.5"/><line x1="12.3" y1="0.5" x2="12.3" y2="1.7"/><line x1="9.0" y1="1.7" x2="15.6" y2="1.7"/><line x1="9.0" y1="1.7" x2="9.0" y2="2.9"/><line x1="15.6" y1="1.7" x2="15.6" y2="2.9"/><line x1="10.1" y1="3.5" x2="14.5" y2="3.5"/><line x1="10.1" y1="3.5" x2="10.1" y2="6.5"/><line x1="14.5" y1="3.5" x2="14.5" y2="6.5"/><line x1="10.1" y1="5.0" x2="14.5" y2="5.0"/><line x1="8.6" y1="6.5" x2="16.0" y2="6.5"/><line x1="17.6" y1="2.0" x2="19.4" y2="2.0"/><line x1="18.5" y1="0.5" x2="18.5" y2="6.5"/><line x1="17.2" y1="5.0" x2="19.6" y2="3.8"/><line x1="20.3" y1="0.8" x2="24.6" y2="0.8"/><line x1="20.5" y1="0.8" x2="20.5" y2="6.5"/><line x1="24.2" y1="0.8" x2="24.2" y2="6.5"/><line x1="20.5" y1="3.5" x2="24.2" y2="3.5"/><line x1="20.5" y1="6.2" x2="24.2" y2="6.2"/><line x1="26.5" y1="0.8" x2="32.5" y2="0.8"/><line x1="29.5" y1="0.8" x2="29.5" y2="2.3"/><line x1="25.8" y1="2.3" x2="33.2" y2="2.3"/><line x1="26.9" y1="3.5" x2="32.1" y2="3.5"/><line x1="26.9" y1="3.5" x2="26.9" y2="5.6"/><line x1="32.1" y1="3.5" x2="32.1" y2="5.6"/><line x1="26.9" y1="5.6" x2="32.1" y2="5.6"/><line x1="28.0" y1="5.6" x2="26.5" y2="6.5"/><line x1="31.0" y1="5.6" x2="32.8" y2="6.5"/></svg></div>
<div style="left:170px;top:98px;width:10px;height:9px;border:1px solid #dae7e4;border-right-color:#90a9a5;border-bottom-color:#90a9a5;box-sizing:border-box"></div>
<svg style="position:absolute;left:173px;top:101px" width="5" height="3" fill="#8a9a98"><polygon points="0,0 5,0 2.5,3"/></svg>
<div style="left:170px;top:111px;width:10px;height:9px;border:1px solid #dae7e4;border-right-color:#90a9a5;border-bottom-color:#90a9a5;box-sizing:border-box"></div>
<svg style="position:absolute;left:173px;top:114px" width="5" height="3" fill="#8a9a98"><polygon points="0,0 5,0 2.5,3"/></svg>
<div style="left:132px;top:124px;width:49px;height:12px;background:#5f666c"></div>
<span class="t" style="left:134px;top:125px;color:#dde1e4;font-size:9.5px;line-height:12px;letter-spacing:-0.3px;-webkit-text-stroke:0.2px #dde1e4;">EQ</span>
<div style="left:167px;top:127px;width:14px;height:7px;box-sizing:border-box;border:1px solid #3c4248;border-right:none;background:#cdd0d4"></div>
<div style="left:132px;top:137px;width:49px;height:12px;background:#3b5775"></div>
<div style="left:152px;top:137px;width:5px;height:12px;background:#687076;border:1px solid #b2b7bb;box-sizing:border-box"></div>
<div style="left:156px;top:137px;width:5px;height:12px;background:#687076;border:1px solid #b2b7bb;box-sizing:border-box"></div>
<div style="left:154px;top:139px;width:1px;height:8px;background:#8e959a"></div>
<div style="left:158px;top:139px;width:1px;height:8px;background:#8e959a"></div>
<div style="left:132px;top:150px;width:49px;height:21px;background:#a8adb2"></div>
<span class="t" style="left:150px;top:151px;color:#22272c;font-size:9px;line-height:13px;width:23px;text-align:right;font-weight:bold">0.0</span>
<div style="left:132px;top:172px;width:49px;height:15px;background:#5e656b"></div>
<span class="t" style="left:138px;top:172.5px;color:#f2f4f6;font-size:9.5px;line-height:15px;width:10px;text-align:center;font-weight:bold">3</span>
<div style="left:168px;top:176px;width:13px;height:8px;background:#50575d;border:1px solid #3e4448;box-sizing:border-box"></div>
<div style="left:169px;top:177px;width:6px;height:6px;background:#d0d4d8"></div>
<div style="left:132px;top:188px;width:49px;height:161px;background:#9aa0a5"></div>
<div class="btn" style="left:133px;top:191px;width:23px;height:16px;background:#b1b6bb;font-size:10.5px;line-height:15px;font-weight:bold;color:#35393e;letter-spacing:0px">A</div>
<div class="btn" style="left:157px;top:191px;width:23px;height:16px;background:#b1b6bb;font-size:10.5px;line-height:15px;font-weight:bold;color:#35393e;letter-spacing:0px">S</div>
<div class="btn" style="left:133px;top:209px;width:23px;height:16px;background:#b1b6bb;font-size:10.5px;line-height:15px;font-weight:bold;color:#35393e;letter-spacing:-0.9px">REC</div>
<div class="btn" style="left:157px;top:209px;width:23px;height:16px;background:#b1b6bb;font-size:10.5px;line-height:15px;font-weight:bold;color:#35393e;letter-spacing:0px">M</div>
<div style="left:137px;top:227px;width:12px;height:107px;background:#3d5776;border:1px solid #36506c;box-sizing:border-box"></div>
<div style="left:137px;top:242px;width:12px;height:12px;background:#b0b5ba;border:1px solid #5e656b;box-sizing:border-box;box-shadow:inset 1px 1px 0 #d3d7db"></div>
<div style="left:137px;top:254px;width:12px;height:12px;background:#b0b5ba;border:1px solid #5e656b;box-sizing:border-box;box-shadow:inset 1px 1px 0 #d3d7db"></div>
<div style="left:139.5px;top:245px;width:7.0px;height:1px;background:#3e444a"></div>
<div style="left:139.5px;top:247px;width:7.0px;height:1px;background:#5a6167"></div>
<div style="left:141.0px;top:250px;width:4px;height:1px;background:#5a6167"></div>
<div style="left:142.0px;top:252px;width:2px;height:1px;background:#6a7177"></div>
<div style="left:142.0px;top:256px;width:2px;height:1px;background:#6a7177"></div>
<div style="left:141.0px;top:258px;width:4px;height:1px;background:#5a6167"></div>
<div style="left:139.5px;top:261px;width:7.0px;height:1px;background:#5a6167"></div>
<div style="left:139.5px;top:263px;width:7.0px;height:1px;background:#3e444a"></div>
<div style="left:154px;top:227px;width:24px;height:107px;background:#26303c"></div>
<div style="left:156px;top:229px;width:20px;height:103px;background:repeating-linear-gradient(0deg,#3b5373 0 1px,#364d69 1px 2px)"></div>
<div style="left:164px;top:229px;width:5px;height:103px;background:#2c3540"></div>
<span class="t" style="left:158.5px;top:240px;color:#dce2e6;font-size:8px;line-height:9px;width:16px;text-align:center">0</span>
<div style="left:161px;top:249px;width:11px;height:1px;background:#b8c0c6"></div>
<span class="t" style="left:158.5px;top:260px;color:#dce2e6;font-size:8px;line-height:9px;width:16px;text-align:center">6</span>
<div style="left:161px;top:268px;width:11px;height:1px;background:#b8c0c6"></div>
<span class="t" style="left:158.5px;top:277px;color:#dce2e6;font-size:8px;line-height:9px;width:16px;text-align:center">20</span>
<div style="left:161px;top:285px;width:11px;height:1px;background:#b8c0c6"></div>
<span class="t" style="left:158.5px;top:293px;color:#dce2e6;font-size:8px;line-height:9px;width:16px;text-align:center">40</span>
<div style="left:161px;top:302px;width:11px;height:1px;background:#b8c0c6"></div>
<span class="t" style="left:158.5px;top:309px;color:#dce2e6;font-size:8px;line-height:9px;width:16px;text-align:center">60</span>
<div style="left:161px;top:318px;width:11px;height:1px;background:#b8c0c6"></div>
<span class="t" style="left:134px;top:336px;color:#22272c;font-size:9px;line-height:12px;font-weight:bold">0.0</span>
<div class="btn" style="left:157px;top:335px;width:21px;height:13px;background:#b7bdc2"></div>
<svg style="position:absolute;left:165px;top:338px" width="6" height="8" fill="#2c3238"><polygon points="4,0.5 4,7.5 0.5,4"/><rect x="4" y="2.5" width="1" height="3"/></svg>
<div style="left:132px;top:350px;width:49px;height:13px;background:#ea0f7e"></div>
<div style="left:142px;top:351px;width:30px;height:10px"><svg width="30" height="10" style="position:absolute;left:0;top:0" stroke="#ffffff" stroke-width="1.35" stroke-linecap="square"><line x1="4.3" y1="0.7" x2="4.3" y2="2.4"/><line x1="0.4" y1="2.4" x2="8.2" y2="2.4"/><line x1="0.4" y1="2.4" x2="0.4" y2="4.1"/><line x1="8.2" y1="2.4" x2="8.2" y2="4.1"/><line x1="1.7" y1="5.0" x2="6.9" y2="5.0"/><line x1="1.7" y1="5.0" x2="1.7" y2="9.3"/><line x1="6.9" y1="5.0" x2="6.9" y2="9.3"/><line x1="1.7" y1="7.2" x2="6.9" y2="7.2"/><line x1="0.0" y1="9.3" x2="8.6" y2="9.3"/><line x1="10.9" y1="1.1" x2="17.7" y2="1.1"/><line x1="14.3" y1="1.1" x2="14.3" y2="3.3"/><line x1="10.0" y1="3.3" x2="18.6" y2="3.3"/><line x1="11.3" y1="5.0" x2="17.3" y2="5.0"/><line x1="11.3" y1="5.0" x2="11.3" y2="8.0"/><line x1="17.3" y1="5.0" x2="17.3" y2="8.0"/><line x1="11.3" y1="8.0" x2="17.3" y2="8.0"/><line x1="12.6" y1="8.0" x2="10.9" y2="9.3"/><line x1="16.0" y1="8.0" x2="18.2" y2="9.3"/><line x1="20.4" y1="2.8" x2="22.6" y2="2.8"/><line x1="21.5" y1="0.7" x2="21.5" y2="9.3"/><line x1="20.0" y1="7.2" x2="22.8" y2="5.4"/><line x1="23.6" y1="1.1" x2="28.6" y2="1.1"/><line x1="23.9" y1="1.1" x2="23.9" y2="9.3"/><line x1="28.2" y1="1.1" x2="28.2" y2="9.3"/><line x1="23.9" y1="5.0" x2="28.2" y2="5.0"/><line x1="23.9" y1="8.9" x2="28.2" y2="8.9"/></svg></div>
<div style="left:132px;top:364px;width:49px;height:16px;background:#868c91"></div>
<div class="btn" style="left:133px;top:365px;width:34px;height:14px;background:#abb0b5;font-size:9px;line-height:13px;color:#474d53">FX</div>
<div class="btn" style="left:166px;top:365px;width:14px;height:14px;background:#abb0b5"></div>
<svg style="position:absolute;left:171px;top:371px" width="4.5" height="3" fill="#2a3036"><polygon points="0,0 4.5,0 2.25,3"/></svg>
<div style="left:132px;top:381px;width:49px;height:10px;background:#5d646a"></div>
<svg style="position:absolute;left:135px;top:382px" width="8" height="7" fill="#f07a7a"><rect x="0" y="2" width="4" height="3"/><polygon points="4,0 8,3.5 4,7"/></svg>
<span class="t" style="left:142.5px;top:380.5px;color:#d6dce0;font-size:8.5px;line-height:12px;letter-spacing:-0.15px">StMast</span>
<svg style="position:absolute;left:172.5px;top:385px" width="5" height="3" fill="#e8ecef"><polygon points="0,0 5,0 2.5,3"/></svg>
<div style="left:181px;top:1px;width:1px;height:390px;background:#474d53"></div>
<div style="left:182px;top:2px;width:50px;height:11px;background:#52616a"></div>
<div style="left:191px;top:5px;width:1px;height:6px;background:#dfe5e8"></div>
<div style="left:192px;top:5px;width:1px;height:6px;background:#8c989e"></div>
<div style="left:190px;top:6px;width:1px;height:1px;background:#8c989e"></div>
<div style="left:194.5px;top:7px;width:2px;height:2px;background:#d8dfe3"></div>
<span class="t" style="left:200px;top:2px;color:#d8dfe3;font-size:8.5px;line-height:12px">2</span>
<svg style="position:absolute;left:225px;top:7px" width="5" height="3" fill="#f2f5f7"><polygon points="0,0 5,0 2.5,3"/></svg>
<div style="left:182px;top:14px;width:50px;height:12px;background:#666c72"></div>
<span class="t" style="left:185px;top:15px;color:#dde1e4;font-size:9.5px;line-height:12px;letter-spacing:-0.3px;-webkit-text-stroke:0.2px #dde1e4;">Aux</span>
<div style="left:217px;top:17px;width:14px;height:7px;box-sizing:border-box;border:1px solid #3c4248;border-right:none;background:#cdd0d4"></div>
<div style="left:182px;top:27px;width:50px;height:12px;background:#666c72"></div>
<span class="t" style="left:184px;top:28px;color:#dde1e4;font-size:9.5px;line-height:12px;letter-spacing:-0.3px;-webkit-text-stroke:0.2px #dde1e4;">Ins</span>
<div style="left:217px;top:30px;width:14px;height:7px;box-sizing:border-box;border:1px solid #3c4248;border-right:none;background:#cdd0d4"></div>
<div style="left:182px;top:40px;width:50px;height:83px;background:#b0cac6"></div>
<div style="left:182px;top:122px;width:50px;height:1px;background:#c6dad6"></div>
<span class="t" style="left:185px;top:42.5px;color:#2a3034;font-size:8.5px;line-height:11px;letter-spacing:-0.6px">SOUND FX</span>
<span class="t" style="left:185px;top:56px;color:#2a3034;font-size:8.5px;line-height:11px;letter-spacing:-0.45px">DYNAMICS</span>
<div style="left:220px;top:70px;width:10px;height:9px;border:1px solid #dae7e4;border-right-color:#90a9a5;border-bottom-color:#90a9a5;box-sizing:border-box"></div>
<svg style="position:absolute;left:223px;top:73px" width="5" height="3" fill="#8a9a98"><polygon points="0,0 5,0 2.5,3"/></svg>
<div style="left:220px;top:84px;width:10px;height:9px;border:1px solid #dae7e4;border-right-color:#90a9a5;border-bottom-color:#90a9a5;box-sizing:border-box"></div>
<svg style="position:absolute;left:223px;top:87px" width="5" height="3" fill="#8a9a98"><polygon points="0,0 5,0 2.5,3"/></svg>
<div style="left:220px;top:98px;width:10px;height:9px;border:1px solid #dae7e4;border-right-color:#90a9a5;border-bottom-color:#90a9a5;box-sizing:border-box"></div>
<svg style="position:absolute;left:223px;top:101px" width="5" height="3" fill="#8a9a98"><polygon points="0,0 5,0 2.5,3"/></svg>
<div style="left:220px;top:111px;width:10px;height:9px;border:1px solid #dae7e4;border-right-color:#90a9a5;border-bottom-color:#90a9a5;box-sizing:border-box"></div>
<svg style="position:absolute;left:223px;top:114px" width="5" height="3" fill="#8a9a98"><polygon points="0,0 5,0 2.5,3"/></svg>
<div style="left:182px;top:124px;width:50px;height:12px;background:#5f666c"></div>
<span class="t" style="left:184px;top:125px;color:#dde1e4;font-size:9.5px;line-height:12px;letter-spacing:-0.3px;-webkit-text-stroke:0.2px #dde1e4;">EQ</span>
<div style="left:217px;top:127px;width:14px;height:7px;box-sizing:border-box;border:1px solid #3c4248;border-right:none;background:#cdd0d4"></div>
<div style="left:182px;top:137px;width:50px;height:12px;background:#3b5775"></div>
<div style="left:202px;top:137px;width:5px;height:12px;background:#687076;border:1px solid #b2b7bb;box-sizing:border-box"></div>
<div style="left:206px;top:137px;width:5px;height:12px;background:#687076;border:1px solid #b2b7bb;box-sizing:border-box"></div>
<div style="left:204px;top:139px;width:1px;height:8px;background:#8e959a"></div>
<div style="left:208px;top:139px;width:1px;height:8px;background:#8e959a"></div>
<div style="left:182px;top:150px;width:50px;height:21px;background:#a8adb2"></div>
<span class="t" style="left:200px;top:151px;color:#22272c;font-size:9px;line-height:13px;width:23px;text-align:right;font-weight:bold">0.0</span>
<div style="left:182px;top:172px;width:50px;height:15px;background:#5e656b"></div>
<span class="t" style="left:188px;top:172.5px;color:#f2f4f6;font-size:9.5px;line-height:15px;width:10px;text-align:center;font-weight:bold">4</span>
<div style="left:218px;top:176px;width:13px;height:8px;background:#50575d;border:1px solid #3e4448;box-sizing:border-box"></div>
<div style="left:219px;top:177px;width:6px;height:6px;background:#d0d4d8"></div>
<div style="left:182px;top:188px;width:50px;height:161px;background:#9aa0a5"></div>
<div class="btn" style="left:183px;top:191px;width:23px;height:16px;background:#b1b6bb;font-size:10.5px;line-height:15px;font-weight:bold;color:#35393e;letter-spacing:0px">A</div>
<div class="btn" style="left:207px;top:191px;width:23px;height:16px;background:#b1b6bb;font-size:10.5px;line-height:15px;font-weight:bold;color:#35393e;letter-spacing:0px">S</div>
<div class="btn" style="left:183px;top:209px;width:23px;height:16px;background:#b1b6bb;font-size:10.5px;line-height:15px;font-weight:bold;color:#35393e;letter-spacing:-0.9px">REC</div>
<div class="btn" style="left:207px;top:209px;width:23px;height:16px;background:#b1b6bb;font-size:10.5px;line-height:15px;font-weight:bold;color:#35393e;letter-spacing:0px">M</div>
<div style="left:187px;top:227px;width:12px;height:107px;background:#3d5776;border:1px solid #36506c;box-sizing:border-box"></div>
<div style="left:187px;top:242px;width:12px;height:12px;background:#b0b5ba;border:1px solid #5e656b;box-sizing:border-box;box-shadow:inset 1px 1px 0 #d3d7db"></div>
<div style="left:187px;top:254px;width:12px;height:12px;background:#b0b5ba;border:1px solid #5e656b;box-sizing:border-box;box-shadow:inset 1px 1px 0 #d3d7db"></div>
<div style="left:189.5px;top:245px;width:7.0px;height:1px;background:#3e444a"></div>
<div style="left:189.5px;top:247px;width:7.0px;height:1px;background:#5a6167"></div>
<div style="left:191.0px;top:250px;width:4px;height:1px;background:#5a6167"></div>
<div style="left:192.0px;top:252px;width:2px;height:1px;background:#6a7177"></div>
<div style="left:192.0px;top:256px;width:2px;height:1px;background:#6a7177"></div>
<div style="left:191.0px;top:258px;width:4px;height:1px;background:#5a6167"></div>
<div style="left:189.5px;top:261px;width:7.0px;height:1px;background:#5a6167"></div>
<div style="left:189.5px;top:263px;width:7.0px;height:1px;background:#3e444a"></div>
<div style="left:204px;top:227px;width:24px;height:107px;background:#26303c"></div>
<div style="left:206px;top:229px;width:20px;height:103px;background:repeating-linear-gradient(0deg,#3b5373 0 1px,#364d69 1px 2px)"></div>
<div style="left:214px;top:229px;width:5px;height:103px;background:#2c3540"></div>
<span class="t" style="left:208.5px;top:240px;color:#dce2e6;font-size:8px;line-height:9px;width:16px;text-align:center">0</span>
<div style="left:211px;top:249px;width:11px;height:1px;background:#b8c0c6"></div>
<span class="t" style="left:208.5px;top:260px;color:#dce2e6;font-size:8px;line-height:9px;width:16px;text-align:center">6</span>
<div style="left:211px;top:268px;width:11px;height:1px;background:#b8c0c6"></div>
<span class="t" style="left:208.5px;top:277px;color:#dce2e6;font-size:8px;line-height:9px;width:16px;text-align:center">20</span>
<div style="left:211px;top:285px;width:11px;height:1px;background:#b8c0c6"></div>
<span class="t" style="left:208.5px;top:293px;color:#dce2e6;font-size:8px;line-height:9px;width:16px;text-align:center">40</span>
<div style="left:211px;top:302px;width:11px;height:1px;background:#b8c0c6"></div>
<span class="t" style="left:208.5px;top:309px;color:#dce2e6;font-size:8px;line-height:9px;width:16px;text-align:center">60</span>
<div style="left:211px;top:318px;width:11px;height:1px;background:#b8c0c6"></div>
<span class="t" style="left:184px;top:336px;color:#22272c;font-size:9px;line-height:12px;font-weight:bold">0.0</span>
<div class="btn" style="left:207px;top:335px;width:21px;height:13px;background:#b7bdc2"></div>
<svg style="position:absolute;left:215px;top:338px" width="6" height="8" fill="#2c3238"><polygon points="4,0.5 4,7.5 0.5,4"/><rect x="4" y="2.5" width="1" height="3"/></svg>
<div style="left:182px;top:350px;width:50px;height:13px;background:#12e276"></div>
<div style="left:198px;top:351px;width:20px;height:10px"><svg width="20" height="10" style="position:absolute;left:0;top:0" stroke="#ffffff" stroke-width="1.35" stroke-linecap="square"><line x1="0.4" y1="2.8" x2="2.6" y2="2.8"/><line x1="1.5" y1="0.7" x2="1.5" y2="9.3"/><line x1="0.0" y1="7.2" x2="2.8" y2="5.4"/><line x1="3.6" y1="1.1" x2="8.6" y2="1.1"/><line x1="3.9" y1="1.1" x2="3.9" y2="9.3"/><line x1="8.2" y1="1.1" x2="8.2" y2="9.3"/><line x1="3.9" y1="5.0" x2="8.2" y2="5.0"/><line x1="3.9" y1="8.9" x2="8.2" y2="8.9"/><line x1="14.3" y1="0.7" x2="14.3" y2="2.4"/><line x1="10.4" y1="2.4" x2="18.2" y2="2.4"/><line x1="10.4" y1="2.4" x2="10.4" y2="4.1"/><line x1="18.2" y1="2.4" x2="18.2" y2="4.1"/><line x1="11.7" y1="5.0" x2="16.9" y2="5.0"/><line x1="11.7" y1="5.0" x2="11.7" y2="9.3"/><line x1="16.9" y1="5.0" x2="16.9" y2="9.3"/><line x1="11.7" y1="7.2" x2="16.9" y2="7.2"/><line x1="10.0" y1="9.3" x2="18.6" y2="9.3"/></svg></div>
<div style="left:182px;top:364px;width:50px;height:16px;background:#868c91"></div>
<div class="btn" style="left:183px;top:365px;width:34px;height:14px;background:#abb0b5;font-size:9px;line-height:13px;color:#474d53">FX</div>
<div class="btn" style="left:216px;top:365px;width:14px;height:14px;background:#abb0b5"></div>
<svg style="position:absolute;left:221px;top:371px" width="4.5" height="3" fill="#2a3036"><polygon points="0,0 4.5,0 2.25,3"/></svg>
<div style="left:182px;top:381px;width:50px;height:10px;background:#5d646a"></div>
<svg style="position:absolute;left:185px;top:382px" width="8" height="7" fill="#f07a7a"><rect x="0" y="2" width="4" height="3"/><polygon points="4,0 8,3.5 4,7"/></svg>
<span class="t" style="left:192.5px;top:380.5px;color:#d6dce0;font-size:8.5px;line-height:12px;letter-spacing:-0.15px">StMast</span>
<svg style="position:absolute;left:222.5px;top:385px" width="5" height="3" fill="#e8ecef"><polygon points="0,0 5,0 2.5,3"/></svg>
<div style="left:232px;top:1px;width:1px;height:390px;background:#474d53"></div>
<div style="left:233px;top:2px;width:49px;height:11px;background:#52616a"></div>
<div style="left:242px;top:5px;width:1px;height:6px;background:#dfe5e8"></div>
<div style="left:243px;top:5px;width:1px;height:6px;background:#8c989e"></div>
<div style="left:241px;top:6px;width:1px;height:1px;background:#8c989e"></div>
<div style="left:245.5px;top:7px;width:2px;height:2px;background:#d8dfe3"></div>
<span class="t" style="left:251px;top:2px;color:#d8dfe3;font-size:8.5px;line-height:12px">2</span>
<svg style="position:absolute;left:276px;top:7px" width="5" height="3" fill="#f2f5f7"><polygon points="0,0 5,0 2.5,3"/></svg>
<div style="left:233px;top:14px;width:49px;height:12px;background:#666c72"></div>
<span class="t" style="left:236px;top:15px;color:#dde1e4;font-size:9.5px;line-height:12px;letter-spacing:-0.3px;-webkit-text-stroke:0.2px #dde1e4;">Aux</span>
<div style="left:268px;top:17px;width:14px;height:7px;box-sizing:border-box;border:1px solid #3c4248;border-right:none;background:#cdd0d4"></div>
<div style="left:233px;top:27px;width:49px;height:12px;background:#666c72"></div>
<span class="t" style="left:235px;top:28px;color:#dde1e4;font-size:9.5px;line-height:12px;letter-spacing:-0.3px;-webkit-text-stroke:0.2px #dde1e4;">Ins</span>
<div style="left:268px;top:30px;width:14px;height:7px;box-sizing:border-box;border:1px solid #3c4248;border-right:none;background:#cdd0d4"></div>
<div style="left:233px;top:40px;width:49px;height:83px;background:#b0cac6"></div>
<div style="left:233px;top:122px;width:49px;height:1px;background:#c6dad6"></div>
<span class="t" style="left:236px;top:42.5px;color:#2a3034;font-size:8.5px;line-height:11px;letter-spacing:-0.6px">SOUND FX</span>
<span class="t" style="left:236px;top:56px;color:#2a3034;font-size:8.5px;line-height:11px;letter-spacing:-0.45px">DYNAMICS</span>
<div style="left:271px;top:70px;width:10px;height:9px;border:1px solid #dae7e4;border-right-color:#90a9a5;border-bottom-color:#90a9a5;box-sizing:border-box"></div>
<svg style="position:absolute;left:274px;top:73px" width="5" height="3" fill="#8a9a98"><polygon points="0,0 5,0 2.5,3"/></svg>
<div style="left:271px;top:84px;width:10px;height:9px;border:1px solid #dae7e4;border-right-color:#90a9a5;border-bottom-color:#90a9a5;box-sizing:border-box"></div>
<svg style="position:absolute;left:274px;top:87px" width="5" height="3" fill="#8a9a98"><polygon points="0,0 5,0 2.5,3"/></svg>
<div style="left:271px;top:98px;width:10px;height:9px;border:1px solid #dae7e4;border-right-color:#90a9a5;border-bottom-color:#90a9a5;box-sizing:border-box"></div>
<svg style="position:absolute;left:274px;top:101px" width="5" height="3" fill="#8a9a98"><polygon points="0,0 5,0 2.5,3"/></svg>
<div style="left:271px;top:111px;width:10px;height:9px;border:1px solid #dae7e4;border-right-color:#90a9a5;border-bottom-color:#90a9a5;box-sizing:border-box"></div>
<svg style="position:absolute;left:274px;top:114px" width="5" height="3" fill="#8a9a98"><polygon points="0,0 5,0 2.5,3"/></svg>
<div style="left:233px;top:124px;width:49px;height:12px;background:#5f666c"></div>
<span class="t" style="left:235px;top:125px;color:#dde1e4;font-size:9.5px;line-height:12px;letter-spacing:-0.3px;-webkit-text-stroke:0.2px #dde1e4;">EQ</span>
<div style="left:268px;top:127px;width:14px;height:7px;box-sizing:border-box;border:1px solid #3c4248;border-right:none;background:#cdd0d4"></div>
<div style="left:233px;top:137px;width:49px;height:12px;background:#3b5775"></div>
<div style="left:253px;top:137px;width:5px;height:12px;background:#687076;border:1px solid #b2b7bb;box-sizing:border-box"></div>
<div style="left:257px;top:137px;width:5px;height:12px;background:#687076;border:1px solid #b2b7bb;box-sizing:border-box"></div>
<div style="left:255px;top:139px;width:1px;height:8px;background:#8e959a"></div>
<div style="left:259px;top:139px;width:1px;height:8px;background:#8e959a"></div>
<div style="left:233px;top:150px;width:49px;height:21px;background:#a8adb2"></div>
<span class="t" style="left:251px;top:151px;color:#22272c;font-size:9px;line-height:13px;width:23px;text-align:right;font-weight:bold">0.0</span>
<div style="left:233px;top:172px;width:49px;height:15px;background:#5e656b"></div>
<span class="t" style="left:239px;top:172.5px;color:#f2f4f6;font-size:9.5px;line-height:15px;width:10px;text-align:center;font-weight:bold">5</span>
<div style="left:269px;top:176px;width:13px;height:8px;background:#50575d;border:1px solid #3e4448;box-sizing:border-box"></div>
<div style="left:270px;top:177px;width:6px;height:6px;background:#d0d4d8"></div>
<div style="left:233px;top:188px;width:49px;height:161px;background:#9aa0a5"></div>
<div class="btn" style="left:234px;top:191px;width:23px;height:16px;background:#b1b6bb;font-size:10.5px;line-height:15px;font-weight:bold;color:#35393e;letter-spacing:0px">A</div>
<div class="btn" style="left:258px;top:191px;width:23px;height:16px;background:#b1b6bb;font-size:10.5px;line-height:15px;font-weight:bold;color:#35393e;letter-spacing:0px">S</div>
<div class="btn" style="left:234px;top:209px;width:23px;height:16px;background:#b1b6bb;font-size:10.5px;line-height:15px;font-weight:bold;color:#35393e;letter-spacing:-0.9px">REC</div>
<div class="btn" style="left:258px;top:209px;width:23px;height:16px;background:#b1b6bb;font-size:10.5px;line-height:15px;font-weight:bold;color:#35393e;letter-spacing:0px">M</div>
<div style="left:238px;top:227px;width:12px;height:107px;background:#3d5776;border:1px solid #36506c;box-sizing:border-box"></div>
<div style="left:238px;top:242px;width:12px;height:12px;background:#b0b5ba;border:1px solid #5e656b;box-sizing:border-box;box-shadow:inset 1px 1px 0 #d3d7db"></div>
<div style="left:238px;top:254px;width:12px;height:12px;background:#b0b5ba;border:1px solid #5e656b;box-sizing:border-box;box-shadow:inset 1px 1px 0 #d3d7db"></div>
<div style="left:240.5px;top:245px;width:7.0px;height:1px;background:#3e444a"></div>
<div style="left:240.5px;top:247px;width:7.0px;height:1px;background:#5a6167"></div>
<div style="left:242.0px;top:250px;width:4px;height:1px;background:#5a6167"></div>
<div style="left:243.0px;top:252px;width:2px;height:1px;background:#6a7177"></div>
<div style="left:243.0px;top:256px;width:2px;height:1px;background:#6a7177"></div>
<div style="left:242.0px;top:258px;width:4px;height:1px;background:#5a6167"></div>
<div style="left:240.5px;top:261px;width:7.0px;height:1px;background:#5a6167"></div>
<div style="left:240.5px;top:263px;width:7.0px;height:1px;background:#3e444a"></div>
<div style="left:255px;top:227px;width:24px;height:107px;background:#26303c"></div>
<div style="left:257px;top:229px;width:20px;height:103px;background:repeating-linear-gradient(0deg,#3b5373 0 1px,#364d69 1px 2px)"></div>
<div style="left:265px;top:229px;width:5px;height:103px;background:#2c3540"></div>
<span class="t" style="left:259.5px;top:240px;color:#dce2e6;font-size:8px;line-height:9px;width:16px;text-align:center">0</span>
<div style="left:262px;top:249px;width:11px;height:1px;background:#b8c0c6"></div>
<span class="t" style="left:259.5px;top:260px;color:#dce2e6;font-size:8px;line-height:9px;width:16px;text-align:center">6</span>
<div style="left:262px;top:268px;width:11px;height:1px;background:#b8c0c6"></div>
<span class="t" style="left:259.5px;top:277px;color:#dce2e6;font-size:8px;line-height:9px;width:16px;text-align:center">20</span>
<div style="left:262px;top:285px;width:11px;height:1px;background:#b8c0c6"></div>
<span class="t" style="left:259.5px;top:293px;color:#dce2e6;font-size:8px;line-height:9px;width:16px;text-align:center">40</span>
<div style="left:262px;top:302px;width:11px;height:1px;background:#b8c0c6"></div>
<span class="t" style="left:259.5px;top:309px;color:#dce2e6;font-size:8px;line-height:9px;width:16px;text-align:center">60</span>
<div style="left:262px;top:318px;width:11px;height:1px;background:#b8c0c6"></div>
<span class="t" style="left:235px;top:336px;color:#22272c;font-size:9px;line-height:12px;font-weight:bold">0.0</span>
<div class="btn" style="left:258px;top:335px;width:21px;height:13px;background:#b7bdc2"></div>
<svg style="position:absolute;left:266px;top:338px" width="6" height="8" fill="#2c3238"><polygon points="4,0.5 4,7.5 0.5,4"/><rect x="4" y="2.5" width="1" height="3"/></svg>
<div style="left:233px;top:350px;width:49px;height:13px;background:#f2f272"></div>
<div style="left:245px;top:351px;width:20px;height:10px"><svg width="20" height="10" style="position:absolute;left:0;top:0" stroke="#ffffff" stroke-width="1.35" stroke-linecap="square"><line x1="4.3" y1="0.7" x2="4.3" y2="2.4"/><line x1="0.4" y1="2.4" x2="8.2" y2="2.4"/><line x1="0.4" y1="2.4" x2="0.4" y2="4.1"/><line x1="8.2" y1="2.4" x2="8.2" y2="4.1"/><line x1="1.7" y1="5.0" x2="6.9" y2="5.0"/><line x1="1.7" y1="5.0" x2="1.7" y2="9.3"/><line x1="6.9" y1="5.0" x2="6.9" y2="9.3"/><line x1="1.7" y1="7.2" x2="6.9" y2="7.2"/><line x1="0.0" y1="9.3" x2="8.6" y2="9.3"/><line x1="10.4" y1="1.5" x2="11.7" y2="2.8"/><line x1="10.0" y1="4.6" x2="11.7" y2="4.6"/><line x1="11.7" y1="4.6" x2="11.7" y2="8.0"/><line x1="10.0" y1="9.3" x2="18.6" y2="8.9"/><line x1="13.0" y1="1.5" x2="18.2" y2="1.5"/><line x1="13.4" y1="3.3" x2="13.4" y2="7.6"/><line x1="17.7" y1="3.3" x2="17.7" y2="7.6"/><line x1="13.4" y1="3.3" x2="17.7" y2="3.3"/><line x1="13.4" y1="5.4" x2="17.7" y2="5.4"/><line x1="13.4" y1="7.6" x2="17.7" y2="7.6"/></svg></div>
<span class="t" style="left:265px;top:350px;color:#fff;font-size:10px;line-height:13px;font-weight:bold">h</span>
<div style="left:233px;top:364px;width:49px;height:16px;background:#868c91"></div>
<div class="btn" style="left:234px;top:365px;width:34px;height:14px;background:#abb0b5;font-size:9px;line-height:13px;color:#474d53">FX</div>
<div class="btn" style="left:267px;top:365px;width:14px;height:14px;background:#abb0b5"></div>
<svg style="position:absolute;left:272px;top:371px" width="4.5" height="3" fill="#2a3036"><polygon points="0,0 4.5,0 2.25,3"/></svg>
<div style="left:233px;top:381px;width:49px;height:10px;background:#5d646a"></div>
<svg style="position:absolute;left:236px;top:382px" width="8" height="7" fill="#f07a7a"><rect x="0" y="2" width="4" height="3"/><polygon points="4,0 8,3.5 4,7"/></svg>
<span class="t" style="left:243.5px;top:380.5px;color:#d6dce0;font-size:8.5px;line-height:12px;letter-spacing:-0.15px">StMast</span>
<svg style="position:absolute;left:273.5px;top:385px" width="5" height="3" fill="#e8ecef"><polygon points="0,0 5,0 2.5,3"/></svg>
<div style="left:282px;top:1px;width:1px;height:390px;background:#474d53"></div>
<div style="left:283px;top:2px;width:49px;height:11px;background:#52616a"></div>
<div style="left:292px;top:5px;width:1px;height:6px;background:#dfe5e8"></div>
<div style="left:293px;top:5px;width:1px;height:6px;background:#8c989e"></div>
<div style="left:291px;top:6px;width:1px;height:1px;background:#8c989e"></div>
<div style="left:295.5px;top:7px;width:2px;height:2px;background:#d8dfe3"></div>
<span class="t" style="left:301px;top:2px;color:#d8dfe3;font-size:8.5px;line-height:12px">2</span>
<svg style="position:absolute;left:326px;top:7px" width="5" height="3" fill="#f2f5f7"><polygon points="0,0 5,0 2.5,3"/></svg>
<div style="left:283px;top:14px;width:49px;height:12px;background:#666c72"></div>
<span class="t" style="left:286px;top:15px;color:#dde1e4;font-size:9.5px;line-height:12px;letter-spacing:-0.3px;-webkit-text-stroke:0.2px #dde1e4;">Aux</span>
<div style="left:318px;top:17px;width:14px;height:7px;box-sizing:border-box;border:1px solid #3c4248;border-right:none;background:#cdd0d4"></div>
<div style="left:283px;top:27px;width:49px;height:12px;background:#666c72"></div>
<span class="t" style="left:285px;top:28px;color:#dde1e4;font-size:9.5px;line-height:12px;letter-spacing:-0.3px;-webkit-text-stroke:0.2px #dde1e4;">Ins</span>
<div style="left:318px;top:30px;width:14px;height:7px;box-sizing:border-box;border:1px solid #3c4248;border-right:none;background:#cdd0d4"></div>
<div style="left:283px;top:40px;width:49px;height:83px;background:#b0cac6"></div>
<div style="left:283px;top:122px;width:49px;height:1px;background:#c6dad6"></div>
<span class="t" style="left:286px;top:42.5px;color:#2a3034;font-size:8.5px;line-height:11px;letter-spacing:-0.6px">SOUND FX</span>
<span class="t" style="left:286px;top:56px;color:#2a3034;font-size:8.5px;line-height:11px;letter-spacing:-0.45px">DYNAMICS</span>
<div style="left:321px;top:70px;width:10px;height:9px;border:1px solid #dae7e4;border-right-color:#90a9a5;border-bottom-color:#90a9a5;box-sizing:border-box"></div>
<svg style="position:absolute;left:324px;top:73px" width="5" height="3" fill="#8a9a98"><polygon points="0,0 5,0 2.5,3"/></svg>
<div style="left:321px;top:84px;width:10px;height:9px;border:1px solid #dae7e4;border-right-color:#90a9a5;border-bottom-color:#90a9a5;box-sizing:border-box"></div>
<svg style="position:absolute;left:324px;top:87px" width="5" height="3" fill="#8a9a98"><polygon points="0,0 5,0 2.5,3"/></svg>
<div style="left:321px;top:98px;width:10px;height:9px;border:1px solid #dae7e4;border-right-color:#90a9a5;border-bottom-color:#90a9a5;box-sizing:border-box"></div>
<svg style="position:absolute;left:324px;top:101px" width="5" height="3" fill="#8a9a98"><polygon points="0,0 5,0 2.5,3"/></svg>
<div style="left:321px;top:111px;width:10px;height:9px;border:1px solid #dae7e4;border-right-color:#90a9a5;border-bottom-color:#90a9a5;box-sizing:border-box"></div>
<svg style="position:absolute;left:324px;top:114px" width="5" height="3" fill="#8a9a98"><polygon points="0,0 5,0 2.5,3"/></svg>
<div style="left:283px;top:124px;width:49px;height:12px;background:#5f666c"></div>
<span class="t" style="left:285px;top:125px;color:#dde1e4;font-size:9.5px;line-height:12px;letter-spacing:-0.3px;-webkit-text-stroke:0.2px #dde1e4;">EQ</span>
<div style="left:318px;top:127px;width:14px;height:7px;box-sizing:border-box;border:1px solid #3c4248;border-right:none;background:#cdd0d4"></div>
<div style="left:283px;top:137px;width:49px;height:12px;background:#3b5775"></div>
<div style="left:303px;top:137px;width:5px;height:12px;background:#687076;border:1px solid #b2b7bb;box-sizing:border-box"></div>
<div style="left:307px;top:137px;width:5px;height:12px;background:#687076;border:1px solid #b2b7bb;box-sizing:border-box"></div>
<div style="left:305px;top:139px;width:1px;height:8px;background:#8e959a"></div>
<div style="left:309px;top:139px;width:1px;height:8px;background:#8e959a"></div>
<div style="left:283px;top:150px;width:49px;height:21px;background:#a8adb2"></div>
<span class="t" style="left:301px;top:151px;color:#22272c;font-size:9px;line-height:13px;width:23px;text-align:right;font-weight:bold">0.0</span>
<div style="left:283px;top:172px;width:49px;height:15px;background:#5e656b"></div>
<span class="t" style="left:289px;top:172.5px;color:#f2f4f6;font-size:9.5px;line-height:15px;width:10px;text-align:center;font-weight:bold">6</span>
<div style="left:319px;top:176px;width:13px;height:8px;background:#50575d;border:1px solid #3e4448;box-sizing:border-box"></div>
<div style="left:320px;top:177px;width:6px;height:6px;background:#d0d4d8"></div>
<div style="left:283px;top:188px;width:49px;height:161px;background:#9aa0a5"></div>
<div class="btn" style="left:284px;top:191px;width:23px;height:16px;background:#b1b6bb;font-size:10.5px;line-height:15px;font-weight:bold;color:#35393e;letter-spacing:0px">A</div>
<div class="btn" style="left:308px;top:191px;width:23px;height:16px;background:#b1b6bb;font-size:10.5px;line-height:15px;font-weight:bold;color:#35393e;letter-spacing:0px">S</div>
<div class="btn" style="left:284px;top:209px;width:23px;height:16px;background:#b1b6bb;font-size:10.5px;line-height:15px;font-weight:bold;color:#35393e;letter-spacing:-0.9px">REC</div>
<div class="btn" style="left:308px;top:209px;width:23px;height:16px;background:#b1b6bb;font-size:10.5px;line-height:15px;font-weight:bold;color:#35393e;letter-spacing:0px">M</div>
<div style="left:288px;top:227px;width:12px;height:107px;background:#3d5776;border:1px solid #36506c;box-sizing:border-box"></div>
<div style="left:288px;top:242px;width:12px;height:12px;background:#b0b5ba;border:1px solid #5e656b;box-sizing:border-box;box-shadow:inset 1px 1px 0 #d3d7db"></div>
<div style="left:288px;top:254px;width:12px;height:12px;background:#b0b5ba;border:1px solid #5e656b;box-sizing:border-box;box-shadow:inset 1px 1px 0 #d3d7db"></div>
<div style="left:290.5px;top:245px;width:7.0px;height:1px;background:#3e444a"></div>
<div style="left:290.5px;top:247px;width:7.0px;height:1px;background:#5a6167"></div>
<div style="left:292.0px;top:250px;width:4px;height:1px;background:#5a6167"></div>
<div style="left:293.0px;top:252px;width:2px;height:1px;background:#6a7177"></div>
<div style="left:293.0px;top:256px;width:2px;height:1px;background:#6a7177"></div>
<div style="left:292.0px;top:258px;width:4px;height:1px;background:#5a6167"></div>
<div style="left:290.5px;top:261px;width:7.0px;height:1px;background:#5a6167"></div>
<div style="left:290.5px;top:263px;width:7.0px;height:1px;background:#3e444a"></div>
<div style="left:305px;top:227px;width:24px;height:107px;background:#26303c"></div>
<div style="left:307px;top:229px;width:20px;height:103px;background:repeating-linear-gradient(0deg,#3b5373 0 1px,#364d69 1px 2px)"></div>
<div style="left:315px;top:229px;width:5px;height:103px;background:#2c3540"></div>
<span class="t" style="left:309.5px;top:240px;color:#dce2e6;font-size:8px;line-height:9px;width:16px;text-align:center">0</span>
<div style="left:312px;top:249px;width:11px;height:1px;background:#b8c0c6"></div>
<span class="t" style="left:309.5px;top:260px;color:#dce2e6;font-size:8px;line-height:9px;width:16px;text-align:center">6</span>
<div style="left:312px;top:268px;width:11px;height:1px;background:#b8c0c6"></div>
<span class="t" style="left:309.5px;top:277px;color:#dce2e6;font-size:8px;line-height:9px;width:16px;text-align:center">20</span>
<div style="left:312px;top:285px;width:11px;height:1px;background:#b8c0c6"></div>
<span class="t" style="left:309.5px;top:293px;color:#dce2e6;font-size:8px;line-height:9px;width:16px;text-align:center">40</span>
<div style="left:312px;top:302px;width:11px;height:1px;background:#b8c0c6"></div>
<span class="t" style="left:309.5px;top:309px;color:#dce2e6;font-size:8px;line-height:9px;width:16px;text-align:center">60</span>
<div style="left:312px;top:318px;width:11px;height:1px;background:#b8c0c6"></div>
<span class="t" style="left:285px;top:336px;color:#22272c;font-size:9px;line-height:12px;font-weight:bold">0.0</span>
<div class="btn" style="left:308px;top:335px;width:21px;height:13px;background:#b7bdc2"></div>
<svg style="position:absolute;left:316px;top:338px" width="6" height="8" fill="#2c3238"><polygon points="4,0.5 4,7.5 0.5,4"/><rect x="4" y="2.5" width="1" height="3"/></svg>
<div style="left:283px;top:350px;width:49px;height:13px;background:#8a8e91"></div>
<span class="t" style="left:283px;top:350px;color:#fff;font-size:9.5px;line-height:13px;width:49px;text-align:center;font-weight:bold;letter-spacing:0.5px">S: 6</span>
<div style="left:283px;top:364px;width:49px;height:16px;background:#868c91"></div>
<div class="btn" style="left:284px;top:365px;width:34px;height:14px;background:#abb0b5;font-size:9px;line-height:13px;color:#474d53">FX</div>
<div class="btn" style="left:317px;top:365px;width:14px;height:14px;background:#abb0b5"></div>
<svg style="position:absolute;left:322px;top:371px" width="4.5" height="3" fill="#2a3036"><polygon points="0,0 4.5,0 2.25,3"/></svg>
<div style="left:283px;top:381px;width:49px;height:10px;background:#5d646a"></div>
<svg style="position:absolute;left:286px;top:382px" width="8" height="7" fill="#f07a7a"><rect x="0" y="2" width="4" height="3"/><polygon points="4,0 8,3.5 4,7"/></svg>
<span class="t" style="left:293.5px;top:380.5px;color:#d6dce0;font-size:8.5px;line-height:12px;letter-spacing:-0.15px">StMast</span>
<svg style="position:absolute;left:323.5px;top:385px" width="5" height="3" fill="#e8ecef"><polygon points="0,0 5,0 2.5,3"/></svg>
<div style="left:332px;top:1px;width:1px;height:390px;background:#474d53"></div>
<div style="left:333px;top:2px;width:49px;height:11px;background:#52616a"></div>
<div style="left:342px;top:5px;width:1px;height:6px;background:#dfe5e8"></div>
<div style="left:343px;top:5px;width:1px;height:6px;background:#8c989e"></div>
<div style="left:341px;top:6px;width:1px;height:1px;background:#8c989e"></div>
<div style="left:345.5px;top:7px;width:2px;height:2px;background:#d8dfe3"></div>
<span class="t" style="left:351px;top:2px;color:#d8dfe3;font-size:8.5px;line-height:12px">2</span>
<svg style="position:absolute;left:376px;top:7px" width="5" height="3" fill="#f2f5f7"><polygon points="0,0 5,0 2.5,3"/></svg>
<div style="left:333px;top:14px;width:49px;height:12px;background:#666c72"></div>
<span class="t" style="left:336px;top:15px;color:#dde1e4;font-size:9.5px;line-height:12px;letter-spacing:-0.3px;-webkit-text-stroke:0.2px #dde1e4;">Aux</span>
<div style="left:368px;top:17px;width:14px;height:7px;box-sizing:border-box;border:1px solid #3c4248;border-right:none;background:#cdd0d4"></div>
<div style="left:333px;top:27px;width:49px;height:12px;background:#666c72"></div>
<span class="t" style="left:335px;top:28px;color:#dde1e4;font-size:9.5px;line-height:12px;letter-spacing:-0.3px;-webkit-text-stroke:0.2px #dde1e4;">Ins</span>
<div style="left:368px;top:30px;width:14px;height:7px;box-sizing:border-box;border:1px solid #3c4248;border-right:none;background:#f5ae30"></div>
<div style="left:333px;top:40px;width:49px;height:83px;background:#b0cac6"></div>
<div style="left:333px;top:122px;width:49px;height:1px;background:#c6dad6"></div>
<span class="t" style="left:336px;top:42.5px;color:#2a3034;font-size:8.5px;line-height:11px;letter-spacing:-0.6px">SOUND FX</span>
<span class="t" style="left:336px;top:56px;color:#2a3034;font-size:8.5px;line-height:11px;letter-spacing:-0.45px">DYNAMICS</span>
<div style="left:335px;top:70px;width:35px;height:9px;background:#f3e2b0"></div>
<div style="left:336px;top:71px;width:35px;height:7px"><svg width="35" height="7" style="position:absolute;left:0;top:0" stroke="#1a1a1a" stroke-width="1.05" stroke-linecap="square"><line x1="0.0" y1="2.3" x2="7.4" y2="2.3"/><line x1="3.7" y1="0.5" x2="3.7" y2="4.1"/><line x1="3.7" y1="3.5" x2="0.4" y2="6.5"/><line x1="3.7" y1="3.5" x2="7.0" y2="6.5"/><line x1="1.1" y1="0.8" x2="2.2" y2="1.7"/><line x1="6.3" y1="0.8" x2="5.2" y2="1.7"/><line x1="8.6" y1="2.3" x2="16.0" y2="2.3"/><line x1="12.3" y1="0.5" x2="12.3" y2="4.1"/><line x1="12.3" y1="3.5" x2="9.0" y2="6.5"/><line x1="12.3" y1="3.5" x2="15.6" y2="6.5"/><line x1="9.7" y1="0.8" x2="10.8" y2="1.7"/><line x1="14.9" y1="0.8" x2="13.8" y2="1.7"/><line x1="17.9" y1="0.8" x2="23.9" y2="0.8"/><line x1="20.9" y1="0.8" x2="20.9" y2="2.3"/><line x1="17.2" y1="2.3" x2="24.6" y2="2.3"/><line x1="18.3" y1="3.5" x2="23.5" y2="3.5"/><line x1="18.3" y1="3.5" x2="18.3" y2="5.6"/><line x1="23.5" y1="3.5" x2="23.5" y2="5.6"/><line x1="18.3" y1="5.6" x2="23.5" y2="5.6"/><line x1="19.4" y1="5.6" x2="17.9" y2="6.5"/><line x1="22.4" y1="5.6" x2="24.2" y2="6.5"/><line x1="29.5" y1="0.5" x2="29.5" y2="1.7"/><line x1="26.2" y1="1.7" x2="32.8" y2="1.7"/><line x1="26.2" y1="1.7" x2="26.2" y2="2.9"/><line x1="32.8" y1="1.7" x2="32.8" y2="2.9"/><line x1="27.3" y1="3.5" x2="31.7" y2="3.5"/><line x1="27.3" y1="3.5" x2="27.3" y2="6.5"/><line x1="31.7" y1="3.5" x2="31.7" y2="6.5"/><line x1="27.3" y1="5.0" x2="31.7" y2="5.0"/><line x1="25.8" y1="6.5" x2="33.2" y2="6.5"/></svg></div>
<div style="left:371px;top:70px;width:10px;height:9px;border:1px solid #dae7e4;border-right-color:#90a9a5;border-bottom-color:#90a9a5;box-sizing:border-box"></div>
<svg style="position:absolute;left:374px;top:73px" width="5" height="3" fill="#8a9a98"><polygon points="0,0 5,0 2.5,3"/></svg>
<div style="left:371px;top:84px;width:10px;height:9px;border:1px solid #dae7e4;border-right-color:#90a9a5;border-bottom-color:#90a9a5;box-sizing:border-box"></div>
<svg style="position:absolute;left:374px;top:87px" width="5" height="3" fill="#8a9a98"><polygon points="0,0 5,0 2.5,3"/></svg>
<div style="left:371px;top:98px;width:10px;height:9px;border:1px solid #dae7e4;border-right-color:#90a9a5;border-bottom-color:#90a9a5;box-sizing:border-box"></div>
<svg style="position:absolute;left:374px;top:101px" width="5" height="3" fill="#8a9a98"><polygon points="0,0 5,0 2.5,3"/></svg>
<div style="left:371px;top:111px;width:10px;height:9px;border:1px solid #dae7e4;border-right-color:#90a9a5;border-bottom-color:#90a9a5;box-sizing:border-box"></div>
<svg style="position:absolute;left:374px;top:114px" width="5" height="3" fill="#8a9a98"><polygon points="0,0 5,0 2.5,3"/></svg>
<div style="left:333px;top:124px;width:49px;height:12px;background:#5f666c"></div>
<span class="t" style="left:335px;top:125px;color:#dde1e4;font-size:9.5px;line-height:12px;letter-spacing:-0.3px;-webkit-text-stroke:0.2px #dde1e4;">EQ</span>
<div style="left:368px;top:127px;width:14px;height:7px;box-sizing:border-box;border:1px solid #3c4248;border-right:none;background:#cdd0d4"></div>
<div style="left:333px;top:137px;width:49px;height:12px;background:#3b5775"></div>
<div style="left:353px;top:137px;width:5px;height:12px;background:#687076;border:1px solid #b2b7bb;box-sizing:border-box"></div>
<div style="left:357px;top:137px;width:5px;height:12px;background:#687076;border:1px solid #b2b7bb;box-sizing:border-box"></div>
<div style="left:355px;top:139px;width:1px;height:8px;background:#8e959a"></div>
<div style="left:359px;top:139px;width:1px;height:8px;background:#8e959a"></div>
<div style="left:333px;top:150px;width:49px;height:21px;background:#a8adb2"></div>
<span class="t" style="left:351px;top:151px;color:#22272c;font-size:9px;line-height:13px;width:23px;text-align:right;font-weight:bold">0.0</span>
<div style="left:333px;top:172px;width:49px;height:15px;background:#5e656b"></div>
<span class="t" style="left:339px;top:172.5px;color:#f2f4f6;font-size:9.5px;line-height:15px;width:10px;text-align:center;font-weight:bold">7</span>
<div style="left:369px;top:176px;width:13px;height:8px;background:#50575d;border:1px solid #3e4448;box-sizing:border-box"></div>
<div style="left:370px;top:177px;width:6px;height:6px;background:#d0d4d8"></div>
<div style="left:333px;top:188px;width:49px;height:161px;background:#9aa0a5"></div>
<div class="btn" style="left:334px;top:191px;width:23px;height:16px;background:#b1b6bb;font-size:10.5px;line-height:15px;font-weight:bold;color:#35393e;letter-spacing:0px">A</div>
<div class="btn" style="left:358px;top:191px;width:23px;height:16px;background:#b1b6bb;font-size:10.5px;line-height:15px;font-weight:bold;color:#35393e;letter-spacing:0px">S</div>
<div class="btn" style="left:334px;top:209px;width:23px;height:16px;box-shadow:none;border-color:#5a3a3a;background:#f42a2a;font-size:10.5px;line-height:15px;font-weight:bold;color:#35393e;letter-spacing:-0.9px">REC</div>
<div class="btn" style="left:358px;top:209px;width:23px;height:16px;background:#b1b6bb;font-size:10.5px;line-height:15px;font-weight:bold;color:#35393e;letter-spacing:0px">M</div>
<div style="left:338px;top:227px;width:12px;height:107px;background:#3d5776;border:1px solid #36506c;box-sizing:border-box"></div>
<div style="left:338px;top:242px;width:12px;height:12px;background:#b0b5ba;border:1px solid #5e656b;box-sizing:border-box;box-shadow:inset 1px 1px 0 #d3d7db"></div>
<div style="left:338px;top:254px;width:12px;height:12px;background:#b0b5ba;border:1px solid #5e656b;box-sizing:border-box;box-shadow:inset 1px 1px 0 #d3d7db"></div>
<div style="left:340.5px;top:245px;width:7.0px;height:1px;background:#3e444a"></div>
<div style="left:340.5px;top:247px;width:7.0px;height:1px;background:#5a6167"></div>
<div style="left:342.0px;top:250px;width:4px;height:1px;background:#5a6167"></div>
<div style="left:343.0px;top:252px;width:2px;height:1px;background:#6a7177"></div>
<div style="left:343.0px;top:256px;width:2px;height:1px;background:#6a7177"></div>
<div style="left:342.0px;top:258px;width:4px;height:1px;background:#5a6167"></div>
<div style="left:340.5px;top:261px;width:7.0px;height:1px;background:#5a6167"></div>
<div style="left:340.5px;top:263px;width:7.0px;height:1px;background:#3e444a"></div>
<div style="left:355px;top:227px;width:24px;height:107px;background:#26303c"></div>
<div style="left:357px;top:229px;width:20px;height:103px;background:repeating-linear-gradient(0deg,#3b5373 0 1px,#364d69 1px 2px)"></div>
<div style="left:365px;top:229px;width:5px;height:103px;background:#2c3540"></div>
<div style="left:358px;top:286px;width:20px;height:2px;background:#72d6f0"></div>
<div style="left:358px;top:292px;width:7px;height:41px;background:#72d6f0"></div>
<div style="left:370px;top:292px;width:8px;height:41px;background:#72d6f0"></div>
<span class="t" style="left:359.5px;top:240px;color:#dce2e6;font-size:8px;line-height:9px;width:16px;text-align:center">0</span>
<div style="left:362px;top:249px;width:11px;height:1px;background:#b8c0c6"></div>
<span class="t" style="left:359.5px;top:260px;color:#dce2e6;font-size:8px;line-height:9px;width:16px;text-align:center">6</span>
<div style="left:362px;top:268px;width:11px;height:1px;background:#b8c0c6"></div>
<span class="t" style="left:359.5px;top:277px;color:#dce2e6;font-size:8px;line-height:9px;width:16px;text-align:center">20</span>
<div style="left:362px;top:285px;width:11px;height:1px;background:#b8c0c6"></div>
<span class="t" style="left:359.5px;top:293px;color:#dce2e6;font-size:8px;line-height:9px;width:16px;text-align:center">40</span>
<div style="left:362px;top:302px;width:11px;height:1px;background:#b8c0c6"></div>
<span class="t" style="left:359.5px;top:309px;color:#dce2e6;font-size:8px;line-height:9px;width:16px;text-align:center">60</span>
<div style="left:362px;top:318px;width:11px;height:1px;background:#b8c0c6"></div>
<span class="t" style="left:335px;top:336px;color:#22272c;font-size:9px;line-height:12px;font-weight:bold">0.0</span>
<div class="btn" style="left:358px;top:335px;width:21px;height:13px;background:#b7bdc2"></div>
<svg style="position:absolute;left:366px;top:338px" width="6" height="8" fill="#2c3238"><polygon points="4,0.5 4,7.5 0.5,4"/><rect x="4" y="2.5" width="1" height="3"/></svg>
<div style="left:333px;top:350px;width:49px;height:13px;background:#f58232"></div>
<span class="t" style="left:333px;top:350px;color:#fff;font-size:9.5px;line-height:13px;width:49px;text-align:center;font-weight:bold;letter-spacing:0.5px">S: 7</span>
<div style="left:333px;top:364px;width:49px;height:16px;background:#868c91"></div>
<div class="btn" style="left:334px;top:365px;width:34px;height:14px;background:#abb0b5;font-size:9px;line-height:13px;color:#474d53">FX</div>
<div class="btn" style="left:367px;top:365px;width:14px;height:14px;background:#abb0b5"></div>
<svg style="position:absolute;left:372px;top:371px" width="4.5" height="3" fill="#2a3036"><polygon points="0,0 4.5,0 2.25,3"/></svg>
<div style="left:333px;top:381px;width:49px;height:10px;background:#5d646a"></div>
<svg style="position:absolute;left:336px;top:382px" width="8" height="7" fill="#f07a7a"><rect x="0" y="2" width="4" height="3"/><polygon points="4,0 8,3.5 4,7"/></svg>
<span class="t" style="left:343.5px;top:380.5px;color:#d6dce0;font-size:8.5px;line-height:12px;letter-spacing:-0.15px">StMast</span>
<svg style="position:absolute;left:373.5px;top:385px" width="5" height="3" fill="#e8ecef"><polygon points="0,0 5,0 2.5,3"/></svg>
<div style="left:382px;top:1px;width:1px;height:390px;background:#474d53"></div>
<div style="left:383px;top:2px;width:49px;height:11px;background:#52616a"></div>
<div style="left:392px;top:5px;width:1px;height:6px;background:#dfe5e8"></div>
<div style="left:393px;top:5px;width:1px;height:6px;background:#8c989e"></div>
<div style="left:391px;top:6px;width:1px;height:1px;background:#8c989e"></div>
<div style="left:395.5px;top:7px;width:2px;height:2px;background:#d8dfe3"></div>
<span class="t" style="left:401px;top:2px;color:#d8dfe3;font-size:8.5px;line-height:12px">2</span>
<svg style="position:absolute;left:426px;top:7px" width="5" height="3" fill="#f2f5f7"><polygon points="0,0 5,0 2.5,3"/></svg>
<div style="left:383px;top:14px;width:49px;height:12px;background:#666c72"></div>
<span class="t" style="left:386px;top:15px;color:#dde1e4;font-size:9.5px;line-height:12px;letter-spacing:-0.3px;-webkit-text-stroke:0.2px #dde1e4;">Aux</span>
<div style="left:418px;top:17px;width:14px;height:7px;box-sizing:border-box;border:1px solid #3c4248;border-right:none;background:#cdd0d4"></div>
<div style="left:383px;top:27px;width:49px;height:12px;background:#666c72"></div>
<span class="t" style="left:385px;top:28px;color:#dde1e4;font-size:9.5px;line-height:12px;letter-spacing:-0.3px;-webkit-text-stroke:0.2px #dde1e4;">Ins</span>
<div style="left:418px;top:30px;width:14px;height:7px;box-sizing:border-box;border:1px solid #3c4248;border-right:none;background:#f5ae30"></div>
<div style="left:383px;top:40px;width:49px;height:83px;background:#b0cac6"></div>
<div style="left:383px;top:122px;width:49px;height:1px;background:#c6dad6"></div>
<span class="t" style="left:386px;top:42.5px;color:#2a3034;font-size:8.5px;line-height:11px;letter-spacing:-0.6px">SOUND FX</span>
<span class="t" style="left:386px;top:56px;color:#2a3034;font-size:8.5px;line-height:11px;letter-spacing:-0.45px">DYNAMICS</span>
<div style="left:385px;top:70px;width:35px;height:9px;background:#f3e2b0"></div>
<span class="t" style="left:385.5px;top:70px;color:#111;font-size:8.5px;line-height:9.5px;letter-spacing:-0.3px;width:36px;overflow:hidden;white-space:nowrap">Ambience:</span>
<div style="left:421px;top:70px;width:10px;height:9px;border:1px solid #dae7e4;border-right-color:#90a9a5;border-bottom-color:#90a9a5;box-sizing:border-box"></div>
<svg style="position:absolute;left:424px;top:73px" width="5" height="3" fill="#8a9a98"><polygon points="0,0 5,0 2.5,3"/></svg>
<div style="left:421px;top:84px;width:10px;height:9px;border:1px solid #dae7e4;border-right-color:#90a9a5;border-bottom-color:#90a9a5;box-sizing:border-box"></div>
<svg style="position:absolute;left:424px;top:87px" width="5" height="3" fill="#8a9a98"><polygon points="0,0 5,0 2.5,3"/></svg>
<div style="left:421px;top:98px;width:10px;height:9px;border:1px solid #dae7e4;border-right-color:#90a9a5;border-bottom-color:#90a9a5;box-sizing:border-box"></div>
<svg style="position:absolute;left:424px;top:101px" width="5" height="3" fill="#8a9a98"><polygon points="0,0 5,0 2.5,3"/></svg>
<div style="left:421px;top:111px;width:10px;height:9px;border:1px solid #dae7e4;border-right-color:#90a9a5;border-bottom-color:#90a9a5;box-sizing:border-box"></div>
<svg style="position:absolute;left:424px;top:114px" width="5" height="3" fill="#8a9a98"><polygon points="0,0 5,0 2.5,3"/></svg>
<div style="left:383px;top:124px;width:49px;height:12px;background:#5f666c"></div>
<span class="t" style="left:385px;top:125px;color:#dde1e4;font-size:9.5px;line-height:12px;letter-spacing:-0.3px;-webkit-text-stroke:0.2px #dde1e4;">EQ</span>
<div style="left:418px;top:127px;width:14px;height:7px;box-sizing:border-box;border:1px solid #3c4248;border-right:none;background:#cdd0d4"></div>
<div style="left:383px;top:137px;width:49px;height:12px;background:#3b5775"></div>
<div style="left:403px;top:137px;width:5px;height:12px;background:#687076;border:1px solid #b2b7bb;box-sizing:border-box"></div>
<div style="left:407px;top:137px;width:5px;height:12px;background:#687076;border:1px solid #b2b7bb;box-sizing:border-box"></div>
<div style="left:405px;top:139px;width:1px;height:8px;background:#8e959a"></div>
<div style="left:409px;top:139px;width:1px;height:8px;background:#8e959a"></div>
<div style="left:383px;top:150px;width:49px;height:21px;background:#a8adb2"></div>
<span class="t" style="left:401px;top:151px;color:#22272c;font-size:9px;line-height:13px;width:23px;text-align:right;font-weight:bold">0.0</span>
<div style="left:383px;top:172px;width:49px;height:15px;background:#5e656b"></div>
<span class="t" style="left:389px;top:172.5px;color:#f2f4f6;font-size:9.5px;line-height:15px;width:10px;text-align:center;font-weight:bold">8</span>
<div style="left:419px;top:176px;width:13px;height:8px;background:#50575d;border:1px solid #3e4448;box-sizing:border-box"></div>
<div style="left:420px;top:177px;width:6px;height:6px;background:#d0d4d8"></div>
<div style="left:383px;top:188px;width:49px;height:161px;background:#9aa0a5"></div>
<div class="btn" style="left:384px;top:191px;width:23px;height:16px;background:#b1b6bb;font-size:10.5px;line-height:15px;font-weight:bold;color:#35393e;letter-spacing:0px">A</div>
<div class="btn" style="left:408px;top:191px;width:23px;height:16px;background:#b1b6bb;font-size:10.5px;line-height:15px;font-weight:bold;color:#35393e;letter-spacing:0px">S</div>
<div class="btn" style="left:384px;top:209px;width:23px;height:16px;background:#b1b6bb;font-size:10.5px;line-height:15px;font-weight:bold;color:#35393e;letter-spacing:-0.9px">REC</div>
<div class="btn" style="left:408px;top:209px;width:23px;height:16px;background:#b1b6bb;font-size:10.5px;line-height:15px;font-weight:bold;color:#35393e;letter-spacing:0px">M</div>
<div style="left:388px;top:227px;width:12px;height:107px;background:#3d5776;border:1px solid #36506c;box-sizing:border-box"></div>
<div style="left:388px;top:242px;width:12px;height:12px;background:#b0b5ba;border:1px solid #5e656b;box-sizing:border-box;box-shadow:inset 1px 1px 0 #d3d7db"></div>
<div style="left:388px;top:254px;width:12px;height:12px;background:#b0b5ba;border:1px solid #5e656b;box-sizing:border-box;box-shadow:inset 1px 1px 0 #d3d7db"></div>
<div style="left:390.5px;top:245px;width:7.0px;height:1px;background:#3e444a"></div>
<div style="left:390.5px;top:247px;width:7.0px;height:1px;background:#5a6167"></div>
<div style="left:392.0px;top:250px;width:4px;height:1px;background:#5a6167"></div>
<div style="left:393.0px;top:252px;width:2px;height:1px;background:#6a7177"></div>
<div style="left:393.0px;top:256px;width:2px;height:1px;background:#6a7177"></div>
<div style="left:392.0px;top:258px;width:4px;height:1px;background:#5a6167"></div>
<div style="left:390.5px;top:261px;width:7.0px;height:1px;background:#5a6167"></div>
<div style="left:390.5px;top:263px;width:7.0px;height:1px;background:#3e444a"></div>
<div style="left:405px;top:227px;width:24px;height:107px;background:#26303c"></div>
<div style="left:407px;top:229px;width:20px;height:103px;background:repeating-linear-gradient(0deg,#3b5373 0 1px,#364d69 1px 2px)"></div>
<div style="left:415px;top:229px;width:5px;height:103px;background:#2c3540"></div>
<span class="t" style="left:409.5px;top:240px;color:#dce2e6;font-size:8px;line-height:9px;width:16px;text-align:center">0</span>
<div style="left:412px;top:249px;width:11px;height:1px;background:#b8c0c6"></div>
<span class="t" style="left:409.5px;top:260px;color:#dce2e6;font-size:8px;line-height:9px;width:16px;text-align:center">6</span>
<div style="left:412px;top:268px;width:11px;height:1px;background:#b8c0c6"></div>
<span class="t" style="left:409.5px;top:277px;color:#dce2e6;font-size:8px;line-height:9px;width:16px;text-align:center">20</span>
<div style="left:412px;top:285px;width:11px;height:1px;background:#b8c0c6"></div>
<span class="t" style="left:409.5px;top:293px;color:#dce2e6;font-size:8px;line-height:9px;width:16px;text-align:center">40</span>
<div style="left:412px;top:302px;width:11px;height:1px;background:#b8c0c6"></div>
<span class="t" style="left:409.5px;top:309px;color:#dce2e6;font-size:8px;line-height:9px;width:16px;text-align:center">60</span>
<div style="left:412px;top:318px;width:11px;height:1px;background:#b8c0c6"></div>
<span class="t" style="left:385px;top:336px;color:#22272c;font-size:9px;line-height:12px;font-weight:bold">0.0</span>
<div class="btn" style="left:408px;top:335px;width:21px;height:13px;background:#b7bdc2"></div>
<svg style="position:absolute;left:416px;top:338px" width="6" height="8" fill="#2c3238"><polygon points="4,0.5 4,7.5 0.5,4"/><rect x="4" y="2.5" width="1" height="3"/></svg>
<div style="left:383px;top:350px;width:49px;height:13px;background:#f20c0c"></div>
<span class="t" style="left:383px;top:350px;color:#fff;font-size:9.5px;line-height:13px;width:49px;text-align:center;font-weight:bold;letter-spacing:0.5px">S: 8</span>
<div style="left:383px;top:364px;width:49px;height:16px;background:#868c91"></div>
<div class="btn" style="left:384px;top:365px;width:34px;height:14px;background:#abb0b5;font-size:9px;line-height:13px;color:#474d53">FX</div>
<div class="btn" style="left:417px;top:365px;width:14px;height:14px;background:#abb0b5"></div>
<svg style="position:absolute;left:422px;top:371px" width="4.5" height="3" fill="#2a3036"><polygon points="0,0 4.5,0 2.25,3"/></svg>
<div style="left:383px;top:381px;width:49px;height:10px;background:#5d646a"></div>
<svg style="position:absolute;left:386px;top:382px" width="8" height="7" fill="#f07a7a"><rect x="0" y="2" width="4" height="3"/><polygon points="4,0 8,3.5 4,7"/></svg>
<span class="t" style="left:393.5px;top:380.5px;color:#d6dce0;font-size:8.5px;line-height:12px;letter-spacing:-0.15px">StMast</span>
<svg style="position:absolute;left:423.5px;top:385px" width="5" height="3" fill="#e8ecef"><polygon points="0,0 5,0 2.5,3"/></svg>
<div style="left:82px;top:172px;width:24px;height:16px;border:1px solid #e01a1a;box-sizing:border-box"></div>
<div style="left:432px;top:1px;width:2px;height:390px;background:#474d53"></div>
<div style="left:434px;top:0px;width:94px;height:13px;background:#7b8187"></div>
<div style="left:434px;top:14px;width:94px;height:12px;background:#666c72"></div>
<span class="t" style="left:436px;top:15px;color:#dde1e4;font-size:9.5px;line-height:12px;letter-spacing:-0.3px;-webkit-text-stroke:0.2px #dde1e4;">Plugins</span>
<div style="left:514px;top:17px;width:14px;height:7px;box-sizing:border-box;border:1px solid #3c4248;border-right:none;background:#cdd0d4"></div>
<div style="left:434px;top:13px;width:94px;height:1px;background:#474d53"></div>
<div style="left:434px;top:26px;width:94px;height:1px;background:#474d53"></div>
<div style="left:434px;top:27px;width:94px;height:12px;background:#666c72"></div>
<span class="t" style="left:437px;top:28px;color:#dde1e4;font-size:9.5px;line-height:12px;letter-spacing:-0.3px;-webkit-text-stroke:0.2px #dde1e4;">Master Ins</span>
<div style="left:434px;top:39px;width:94px;height:1px;background:#474d53"></div>
<div style="left:434px;top:40px;width:94px;height:83px;background:#b0cac6"></div>
<div style="left:434px;top:122px;width:94px;height:1px;background:#c6dad6"></div>
<div style="left:527px;top:40px;width:1px;height:83px;background:#c6dad6"></div>
<span class="t" style="left:437px;top:42.5px;color:#2a3034;font-size:8.5px;line-height:11px;letter-spacing:-0.65px">SOUND FX</span>
<span class="t" style="left:437px;top:56.1px;color:#2a3034;font-size:8.5px;line-height:11px;letter-spacing:-0.85px">MASTERING SUITE</span>
<span class="t" style="left:437px;top:69.7px;color:#2a3034;font-size:8.5px;line-height:11px;letter-spacing:-1.0px">FFT FILTER</span>
<span class="t" style="left:437px;top:83.3px;color:#2a3034;font-size:8.5px;line-height:11px;letter-spacing:-0.9px">VOCODER</span>
<span class="t" style="left:437px;top:96.9px;color:#2a3034;font-size:8.5px;line-height:11px;letter-spacing:-0.45px">LIMITER</span>
<div style="left:434px;top:123px;width:94px;height:1px;background:#474d53"></div>
<div style="left:434px;top:124px;width:94px;height:12px;background:#5f666c"></div>
<span class="t" style="left:437px;top:125px;color:#dde1e4;font-size:9.5px;line-height:12px;letter-spacing:-0.3px;-webkit-text-stroke:0.2px #dde1e4;">Master EQ</span>
<div style="left:514px;top:127px;width:14px;height:7px;box-sizing:border-box;border:1px solid #3c4248;border-right:none;background:#cdd0d4"></div>
<div style="left:434px;top:136px;width:94px;height:1px;background:#474d53"></div>
<div style="left:434px;top:137px;width:58px;height:12px;background:#3b5775"></div>
<div style="left:434px;top:138px;width:28px;height:10px;background:#6a96b6"></div>
<div style="left:434px;top:149px;width:58px;height:1px;background:#474d53"></div>
<div style="left:434px;top:150px;width:58px;height:21px;background:#a8adb2"></div>
<div class="btn" style="left:436px;top:154px;width:21px;height:13px;background:#b0b6bb;font-size:8.5px;line-height:12px;color:#3a4046;letter-spacing:0.2px">StE.</div>
<span class="t" style="left:460px;top:151px;color:#1f2429;font-size:9px;line-height:13px;width:26.5px;text-align:right;font-weight:bold">100</span>
<div style="left:434px;top:171px;width:58px;height:1px;background:#474d53"></div>
<div style="left:434px;top:172px;width:58px;height:15px;background:#7b8187"></div>
<span class="t" style="left:437.5px;top:172px;color:#383f46;font-size:12.5px;line-height:17px;font-weight:bold;letter-spacing:-0.75px">MASTER</span>
<div style="left:434px;top:187px;width:58px;height:1px;background:#474d53"></div>
<div style="left:434px;top:188px;width:58px;height:161px;background:#9aa0a5"></div>
<div class="btn" style="left:437px;top:194px;width:48px;height:13px;background:#b9bfc4;font-size:9.5px;line-height:12px;color:#30363c">Normalize</div>
<svg style="position:absolute;left:444px;top:215px" width="36" height="14"><path d="M4.5,13 L4.5,11 Q4.5,7.5 8,7.5 L14,7.5 M22,7.5 L28,7.5 Q31.5,7.5 31.5,11 L31.5,13" stroke="#4a5056" stroke-width="1.2" fill="none"/><circle cx="18" cy="7.3" r="4.3" fill="#5e666c"/><circle cx="18" cy="7.3" r="2.6" fill="#8adcf4"/></svg>
<div style="left:442px;top:227px;width:13px;height:107px;background:#3d5877;border:1px solid #34495f;box-sizing:border-box"></div>
<div style="left:442px;top:242px;width:13px;height:12px;background:#b0b5ba;border:1px solid #5e656b;box-sizing:border-box;box-shadow:inset 1px 1px 0 #d3d7db"></div>
<div style="left:442px;top:254px;width:13px;height:12px;background:#b0b5ba;border:1px solid #5e656b;box-sizing:border-box;box-shadow:inset 1px 1px 0 #d3d7db"></div>
<div style="left:445.0px;top:245px;width:7.0px;height:1px;background:#3e444a"></div>
<div style="left:445.0px;top:247px;width:7.0px;height:1px;background:#5a6167"></div>
<div style="left:446.5px;top:250px;width:4px;height:1px;background:#5a6167"></div>
<div style="left:447.5px;top:252px;width:2px;height:1px;background:#6a7177"></div>
<div style="left:447.5px;top:256px;width:2px;height:1px;background:#6a7177"></div>
<div style="left:446.5px;top:258px;width:4px;height:1px;background:#5a6167"></div>
<div style="left:445.0px;top:261px;width:7.0px;height:1px;background:#5a6167"></div>
<div style="left:445.0px;top:263px;width:7.0px;height:1px;background:#3e444a"></div>
<div style="left:469px;top:227px;width:13px;height:107px;background:#3d5877;border:1px solid #34495f;box-sizing:border-box"></div>
<div style="left:469px;top:242px;width:13px;height:12px;background:#b0b5ba;border:1px solid #5e656b;box-sizing:border-box;box-shadow:inset 1px 1px 0 #d3d7db"></div>
<div style="left:469px;top:254px;width:13px;height:12px;background:#b0b5ba;border:1px solid #5e656b;box-sizing:border-box;box-shadow:inset 1px 1px 0 #d3d7db"></div>
<div style="left:472.0px;top:245px;width:7.0px;height:1px;background:#3e444a"></div>
<div style="left:472.0px;top:247px;width:7.0px;height:1px;background:#5a6167"></div>
<div style="left:473.5px;top:250px;width:4px;height:1px;background:#5a6167"></div>
<div style="left:474.5px;top:252px;width:2px;height:1px;background:#6a7177"></div>
<div style="left:474.5px;top:256px;width:2px;height:1px;background:#6a7177"></div>
<div style="left:473.5px;top:258px;width:4px;height:1px;background:#5a6167"></div>
<div style="left:472.0px;top:261px;width:7.0px;height:1px;background:#5a6167"></div>
<div style="left:472.0px;top:263px;width:7.0px;height:1px;background:#3e444a"></div>
<span class="t" style="left:439px;top:336px;color:#22272c;font-size:9px;line-height:12px;font-weight:bold">0.0</span>
<span class="t" style="left:466px;top:336px;color:#22272c;font-size:9px;line-height:12px;font-weight:bold">0.0</span>
<div style="left:491px;top:137px;width:35px;height:212px;background:#28323e"></div>
<div style="left:495px;top:162px;width:7px;height:182px;background:repeating-linear-gradient(0deg,#3b5373 0 1px,#364d69 1px 2px)"></div>
<div style="left:516px;top:162px;width:7px;height:182px;background:repeating-linear-gradient(0deg,#3b5373 0 1px,#364d69 1px 2px)"></div>
<div style="left:526px;top:137px;width:2px;height:34px;background:#c8ccd0"></div>
<span class="t" style="left:501px;top:157px;color:#c8ced3;font-size:8px;line-height:9px;width:16px;text-align:center">6</span>
<div style="left:503px;top:165px;width:12px;height:1px;background:#b8c0c6"></div>
<span class="t" style="left:501px;top:173px;color:#c8ced3;font-size:8px;line-height:9px;width:16px;text-align:center">3</span>
<div style="left:503px;top:181px;width:12px;height:1px;background:#b8c0c6"></div>
<span class="t" style="left:501px;top:188px;color:#c8ced3;font-size:8px;line-height:9px;width:16px;text-align:center">0</span>
<div style="left:503px;top:195px;width:12px;height:1px;background:#b8c0c6"></div>
<span class="t" style="left:501px;top:205px;color:#c8ced3;font-size:8px;line-height:9px;width:16px;text-align:center">3</span>
<div style="left:503px;top:213px;width:12px;height:1px;background:#b8c0c6"></div>
<span class="t" style="left:501px;top:223px;color:#c8ced3;font-size:8px;line-height:9px;width:16px;text-align:center">6</span>
<div style="left:503px;top:230px;width:12px;height:1px;background:#b8c0c6"></div>
<span class="t" style="left:501px;top:237px;color:#c8ced3;font-size:8px;line-height:9px;width:16px;text-align:center">10</span>
<div style="left:503px;top:245px;width:12px;height:1px;background:#b8c0c6"></div>
<span class="t" style="left:501px;top:253px;color:#c8ced3;font-size:8px;line-height:9px;width:16px;text-align:center">20</span>
<div style="left:503px;top:261px;width:12px;height:1px;background:#b8c0c6"></div>
<span class="t" style="left:501px;top:267px;color:#c8ced3;font-size:8px;line-height:9px;width:16px;text-align:center">30</span>
<div style="left:503px;top:275px;width:12px;height:1px;background:#b8c0c6"></div>
<span class="t" style="left:501px;top:283px;color:#c8ced3;font-size:8px;line-height:9px;width:16px;text-align:center">40</span>
<div style="left:503px;top:291px;width:12px;height:1px;background:#b8c0c6"></div>
<span class="t" style="left:501px;top:298px;color:#c8ced3;font-size:8px;line-height:9px;width:16px;text-align:center">50</span>
<div style="left:503px;top:305px;width:12px;height:1px;background:#b8c0c6"></div>
<span class="t" style="left:501px;top:313px;color:#c8ced3;font-size:8px;line-height:9px;width:16px;text-align:center">60</span>
<div style="left:503px;top:321px;width:12px;height:1px;background:#b8c0c6"></div>
<span class="t" style="left:501px;top:328px;color:#c8ced3;font-size:8px;line-height:9px;width:16px;text-align:center">70</span>
<div style="left:503px;top:336px;width:12px;height:1px;background:#b8c0c6"></div>
<div style="left:434px;top:349px;width:94px;height:1px;background:#474d53"></div>
<div style="left:434px;top:350px;width:94px;height:13px;background:#56646a"></div>
<div style="left:434px;top:363px;width:94px;height:1px;background:#474d53"></div>
<div style="left:434px;top:364px;width:94px;height:16px;background:#868c91"></div>
<div class="btn" style="left:435px;top:365px;width:79px;height:14px;background:#a9afb4;font-size:8px;line-height:13px;color:#3e444a;letter-spacing:0.6px">Mix to File</div>
<div class="btn" style="left:513px;top:365px;width:14px;height:14px;background:#a9afb4;font-size:8px;line-height:13px;color:#3a4046;letter-spacing:-0.2px;overflow:hidden;text-indent:-1px">On</div>
<div style="left:434px;top:380px;width:94px;height:1px;background:#474d53"></div>
<div style="left:434px;top:381px;width:94px;height:10px;background:#5d646a"></div>
<svg style="position:absolute;left:438px;top:383px" width="6" height="7" fill="#20d040"><rect x="1.8" y="0" width="2.4" height="3"/><polygon points="0,3 6,3 3,7"/></svg>
<span class="t" style="left:451px;top:380.5px;color:#dde2e6;font-size:8px;line-height:12px;letter-spacing:-0.2px">1:Realtek H..output</span>
<svg style="position:absolute;left:522px;top:385px" width="5" height="3" fill="#e8ecef"><polygon points="0,0 5,0 2.5,3"/></svg>
<div style="left:528px;top:1px;width:1px;height:390px;background:#474d53"></div>
<div style="left:529px;top:0px;width:67px;height:26px;background:#7b8187"></div>
<div style="left:529px;top:26px;width:67px;height:1px;background:#474d53"></div>
<div style="left:529px;top:27px;width:67px;height:12px;background:#5d646a"></div>
<span class="t" style="left:529px;top:28px;color:#e2e6e9;font-size:9.5px;line-height:12px;width:67px;text-align:center">Reset</span>
<div style="left:529px;top:39px;width:67px;height:1px;background:#474d53"></div>
<div style="left:529px;top:40px;width:67px;height:83px;background:#868c92"></div>
<div class="btn" style="left:534px;top:42px;width:28px;height:13px;background:#a3a9ae;font-size:7.5px;line-height:12px;color:#30363c;letter-spacing:0.7px">Mono</div>
<div class="btn" style="left:565px;top:42px;width:28px;height:13px;background:#a3a9ae;font-size:7.5px;line-height:12px;color:#30363c;letter-spacing:0.3px">Stereo</div>
<div class="btn" style="left:534px;top:74px;width:28px;height:13px;background:#a3a9ae;font-size:7.5px;line-height:12px;color:#30363c;letter-spacing:0.7px">Aux</div>
<div class="btn" style="left:565px;top:74px;width:28px;height:13px;background:#a3a9ae;font-size:7.5px;line-height:12px;color:#30363c;letter-spacing:0.7px">EQ</div>
<div class="btn" style="left:534px;top:101px;width:28px;height:13px;background:#a3a9ae;font-size:7.5px;line-height:12px;color:#30363c;letter-spacing:0.7px">Peaks</div>
<div class="btn" style="left:565px;top:101px;width:28px;height:13px;background:#a3a9ae;font-size:7.5px;line-height:12px;color:#30363c;letter-spacing:0.7px">FX</div>
<svg style="position:absolute;left:536px;top:57px" width="60" height="8"><path d="M0.5,0 L0.5,4.5 L9,4.5 M47,4.5 L54.5,4.5 L54.5,0" stroke="#3a4046" stroke-width="1" fill="none"/></svg>
<span class="t" style="left:545px;top:56.5px;color:#3a4046;font-size:8.5px;line-height:9px;letter-spacing:0.3px">Track Op</span>
<div style="left:529px;top:123px;width:67px;height:1px;background:#474d53"></div>
<div style="left:529px;top:124px;width:67px;height:12px;background:#5d646a"></div>
<span class="t" style="left:529px;top:125px;color:#e2e6e9;font-size:9.5px;line-height:12px;width:67px;text-align:center">Snapshots</span>
<div style="left:529px;top:136px;width:67px;height:1px;background:#474d53"></div>
<div style="left:529px;top:137px;width:67px;height:34px;background:#868c92"></div>
<div style="left:529px;top:171px;width:67px;height:1px;background:#474d53"></div>
<div style="left:529px;top:172px;width:67px;height:15px;background:#5d646a"></div>
<div style="left:529px;top:187px;width:67px;height:1px;background:#474d53"></div>
<div style="left:529px;top:188px;width:67px;height:203px;background:#868c92"></div>
<div class="btn" style="left:534px;top:192px;width:21px;height:15px;background:#a3a9ae;font-size:11px;line-height:14px;font-weight:bold;color:#30363c">S</div>
<div class="btn" style="left:558px;top:192px;width:36px;height:15px;background:#a3a9ae;font-size:8.5px;line-height:14px;color:#30363c;letter-spacing:0.4px">Bypass</div>
<div class="btn" style="left:534px;top:210px;width:21px;height:15px;background:#a3a9ae;font-size:11px;line-height:14px;font-weight:bold;color:#30363c">M</div>
<div class="btn" style="left:558px;top:211px;width:11px;height:12px;background:#a3a9ae"></div>
<span class="t" style="left:570.5px;top:210px;color:#30363c;font-size:7.5px;line-height:7px;letter-spacing:0.7px">Auto</span>
<span class="t" style="left:570.5px;top:216.5px;color:#30363c;font-size:7.5px;line-height:7px;letter-spacing:0.7px">Rec</span>
<div class="btn" style="left:536px;top:229px;width:13px;height:11px;background:#a3a9ae"></div>
<span class="t" style="left:550px;top:229px;color:#30363c;font-size:8px;line-height:11px">Tracks</span>
<div class="btn" style="left:536px;top:243px;width:13px;height:11px;background:#a3a9ae"></div>
<span class="t" style="left:550px;top:242px;color:#30363c;font-size:8px;line-height:11px">Master</span>
<div class="btn" style="left:541px;top:268px;width:43px;height:44px;background:#a3a9ae"></div>
<svg style="position:absolute;left:548px;top:273px" width="29" height="35"><polygon points="0,0 28,17 0,34" fill="#5c6268"/></svg>
<svg style="position:absolute;left:534px;top:318px" width="25" height="25"><circle cx="12.5" cy="12.5" r="9.8" fill="#b4babf" stroke="#50575d" stroke-width="3.6"/><rect x="11.8" y="5" width="1.6" height="7" fill="#2a6090"/></svg>
<span class="t" style="left:562px;top:317px;color:#30363c;font-size:8.5px;line-height:10px;letter-spacing:0.3px">Phones</span>
<span class="t" style="left:562px;top:333px;color:#22272c;font-size:9.5px;line-height:12px;font-weight:bold">0.0</span>
<div class="btn" style="left:532px;top:351px;width:30px;height:12px;background:#a3a9ae;font-size:8px;line-height:11px;color:#30363c;letter-spacing:0.6px">Setup</div>
<div class="btn" style="left:576px;top:351px;width:19px;height:12px;background:#a3a9ae;font-size:9px;line-height:11px;color:#30363c;font-weight:bold">?</div>
<span class="t" style="left:533px;top:367px;color:#30363c;font-size:8.5px;line-height:11px;letter-spacing:0.3px">Presets:</span>
<div style="left:529px;top:380px;width:67px;height:1px;background:#474d53"></div>
<div style="left:529px;top:381px;width:67px;height:10px;background:#5d646a"></div>
<svg style="position:absolute;left:588px;top:384px" width="6" height="4" fill="#e8ecef"><polygon points="0,0 6,0 3.0,4"/></svg>
<div style="left:0px;top:0px;width:2px;height:409px;background:#efefe3"></div>
<div style="left:2px;top:0px;width:1px;height:409px;background:#5c636a"></div>
<div style="left:597px;top:0px;width:2px;height:409px;background:#ececdf"></div>
<div style="left:599px;top:0px;width:1px;height:409px;background:#8a9096"></div>
<div style="left:596px;top:0px;width:1px;height:409px;background:#565d68"></div>
<div style="left:0px;top:406px;width:597px;height:2px;background:#ececdf"></div>
<div style="left:0px;top:408px;width:600px;height:1px;background:#8a9096"></div>
<div style="left:2px;top:405px;width:594px;height:1px;background:#747a80"></div>
<div style="left:554px;top:62px;width:50px;height:14px;background:#ffffe1;border:1px solid #222;box-sizing:border-box"></div>
<div style="left:557px;top:65px;width:46px;height:8px"><svg width="46" height="8" style="position:absolute;left:0;top:0" stroke="#111" stroke-width="1.05" stroke-linecap="square"><line x1="2.5" y1="0.5" x2="0.5" y2="3.7"/><line x1="1.5" y1="2.6" x2="1.5" y2="7.5"/><line x1="3.5" y1="1.6" x2="10.0" y2="1.6"/><line x1="6.5" y1="0.5" x2="6.5" y2="7.5"/><line x1="4.0" y1="3.7" x2="9.5" y2="3.7"/><line x1="4.0" y1="5.7" x2="9.5" y2="5.7"/><line x1="4.5" y1="3.7" x2="4.5" y2="5.7"/><line x1="12.7" y1="2.3" x2="15.2" y2="2.3"/><line x1="14.0" y1="0.5" x2="14.0" y2="7.5"/><line x1="12.2" y1="5.7" x2="15.4" y2="4.3"/><line x1="16.4" y1="0.9" x2="22.2" y2="0.9"/><line x1="16.7" y1="0.9" x2="16.7" y2="7.5"/><line x1="21.7" y1="0.9" x2="21.7" y2="7.5"/><line x1="16.7" y1="4.0" x2="21.7" y2="4.0"/><line x1="16.7" y1="7.1" x2="21.7" y2="7.1"/><line x1="25.4" y1="0.9" x2="33.4" y2="0.9"/><line x1="29.4" y1="0.9" x2="29.4" y2="2.6"/><line x1="24.4" y1="2.6" x2="34.4" y2="2.6"/><line x1="25.9" y1="4.0" x2="32.9" y2="4.0"/><line x1="25.9" y1="4.0" x2="25.9" y2="6.4"/><line x1="32.9" y1="4.0" x2="32.9" y2="6.4"/><line x1="25.9" y1="6.4" x2="32.9" y2="6.4"/><line x1="27.4" y1="6.4" x2="25.4" y2="7.5"/><line x1="31.4" y1="6.4" x2="33.9" y2="7.5"/><line x1="37.6" y1="0.9" x2="45.6" y2="0.9"/><line x1="41.6" y1="0.9" x2="41.6" y2="2.6"/><line x1="36.6" y1="2.6" x2="46.6" y2="2.6"/><line x1="38.1" y1="4.0" x2="45.1" y2="4.0"/><line x1="38.1" y1="4.0" x2="38.1" y2="6.4"/><line x1="45.1" y1="4.0" x2="45.1" y2="6.4"/><line x1="38.1" y1="6.4" x2="45.1" y2="6.4"/><line x1="39.6" y1="6.4" x2="37.6" y2="7.5"/><line x1="43.6" y1="6.4" x2="46.1" y2="7.5"/></svg></div>
</body></html>
